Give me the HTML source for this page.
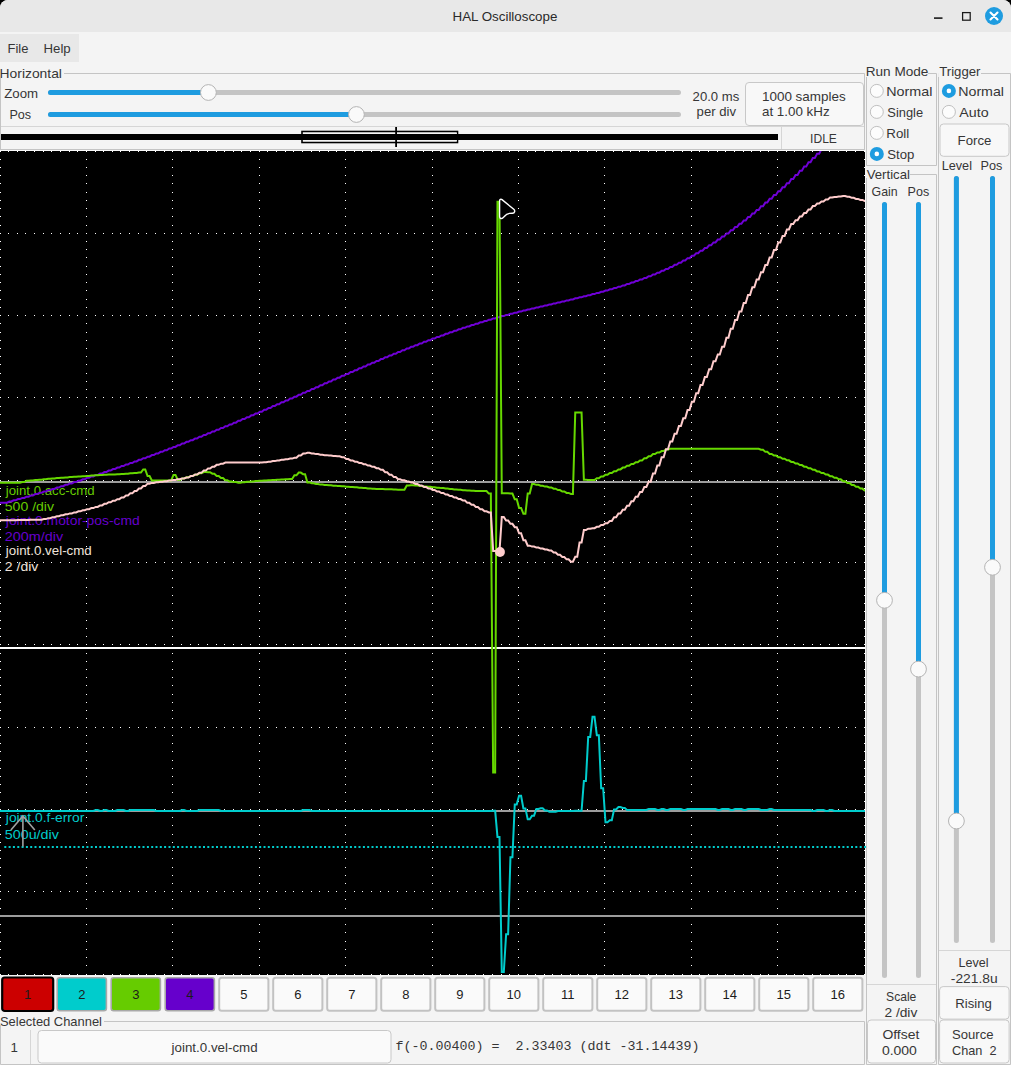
<!DOCTYPE html>
<html><head><meta charset="utf-8"><style>html,body{margin:0;padding:0;background:#000;width:1011px;height:1065px;overflow:hidden}svg{display:block}text{white-space:pre}</style></head>
<body><svg width="1011" height="1065" viewBox="0 0 1011 1065">
<rect x="0" y="0" width="1011" height="1065" fill="#000"/>
<path d="M0,8 A8,8 0 0 1 8,0 H1003 A8,8 0 0 1 1011,8 V1065 H0 Z" fill="#f4f4f4"/>
<path d="M0,8 A8,8 0 0 1 8,0 H1003 A8,8 0 0 1 1011,8 V32 H0 Z" fill="#e8e8e8"/>
<text x="452.50" y="20.8" font-size="13.3" fill="#2a2a2a" font-family='"Liberation Sans", sans-serif' textLength="104.89" lengthAdjust="spacingAndGlyphs">HAL Oscilloscope</text>
<rect x="934" y="17.3" width="8.5" height="1.6" fill="#1a1a1a" rx="0" />
<rect x="962.6" y="12.6" width="7.6" height="7.6" fill="none" stroke="#1a1a1a" stroke-width="1.25" rx="0" />
<circle cx="994" cy="16" r="9" fill="#1e9ce0"/>
<path d="M990.5,12.5 L997.5,19.5 M997.5,12.5 L990.5,19.5" stroke="#fff" stroke-width="2.1" stroke-linecap="round"/>
<rect x="0" y="34" width="79" height="28" fill="#e8e8e8" rx="0" />
<text x="7.53" y="53" font-size="13.3" fill="#363636" font-family='"Liberation Sans", sans-serif' textLength="20.86" lengthAdjust="spacingAndGlyphs">File</text>
<text x="43.51" y="53" font-size="13.3" fill="#363636" font-family='"Liberation Sans", sans-serif' textLength="27.19" lengthAdjust="spacingAndGlyphs">Help</text>
<path d="M0.5,149.5 V73.5 H864.5 V149.5" fill="none" stroke="#c4c4c4" stroke-width="1"/>
<rect x="0" y="64" width="64" height="14" fill="#f4f4f4" rx="0" />
<text x="-0.44" y="77.8" font-size="13.3" fill="#363636" font-family='"Liberation Sans", sans-serif' textLength="62.39" lengthAdjust="spacingAndGlyphs">Horizontal</text>
<text x="4.20" y="97.7" font-size="13.3" fill="#363636" font-family='"Liberation Sans", sans-serif' textLength="33.88" lengthAdjust="spacingAndGlyphs">Zoom</text>
<text x="9.45" y="119" font-size="13.3" fill="#363636" font-family='"Liberation Sans", sans-serif' textLength="21.71" lengthAdjust="spacingAndGlyphs">Pos</text>
<line x1="50.5" y1="92.5" x2="678.5" y2="92.5" stroke="#c4c4c4" stroke-width="5" stroke-linecap="round"/>
<line x1="50.5" y1="92.5" x2="208.4" y2="92.5" stroke="#1e9ce0" stroke-width="5" stroke-linecap="round"/>
<circle cx="208.4" cy="92.5" r="7.9" fill="#fafafa" stroke="#b4b4b4" stroke-width="1"/>
<line x1="50.5" y1="114.5" x2="678.5" y2="114.5" stroke="#c4c4c4" stroke-width="5" stroke-linecap="round"/>
<line x1="50.5" y1="114.5" x2="356.4" y2="114.5" stroke="#1e9ce0" stroke-width="5" stroke-linecap="round"/>
<circle cx="356.4" cy="114.5" r="7.9" fill="#fafafa" stroke="#b4b4b4" stroke-width="1"/>
<text x="692.60" y="100.6" font-size="13.3" fill="#363636" font-family='"Liberation Sans", sans-serif' textLength="46.65" lengthAdjust="spacingAndGlyphs">20.0 ms</text>
<text x="696.60" y="116" font-size="13.3" fill="#363636" font-family='"Liberation Sans", sans-serif' textLength="39.35" lengthAdjust="spacingAndGlyphs">per div</text>
<rect x="745.5" y="82.5" width="118" height="43" fill="#f8f8f8" stroke="#c8c8c8" stroke-width="1" rx="3.5" />
<text x="761.99" y="100.6" font-size="13.3" fill="#363636" font-family='"Liberation Sans", sans-serif' textLength="83.66" lengthAdjust="spacingAndGlyphs">1000 samples</text>
<text x="762.00" y="116.2" font-size="13.3" fill="#363636" font-family='"Liberation Sans", sans-serif' textLength="67.65" lengthAdjust="spacingAndGlyphs">at 1.00 kHz</text>
<line x1="1" y1="126.5" x2="864" y2="126.5" stroke="#d6d6d6" stroke-width="1" />
<line x1="781.5" y1="127" x2="781.5" y2="149" stroke="#d6d6d6" stroke-width="1" />
<text x="810.09" y="142.7" font-size="13.3" fill="#363636" font-family='"Liberation Sans", sans-serif' textLength="26.79" lengthAdjust="spacingAndGlyphs">IDLE</text>
<rect x="1" y="134" width="777" height="6" fill="#000" rx="0" />
<rect x="302" y="131.5" width="155.5" height="11" fill="none" stroke="#000" stroke-width="1.6" rx="0" />
<line x1="303" y1="133.3" x2="457" y2="133.3" stroke="#f4f4f4" stroke-width="1" />
<line x1="303" y1="140.7" x2="457" y2="140.7" stroke="#f4f4f4" stroke-width="1" />
<rect x="395.2" y="127" width="1.8" height="20" fill="#000" rx="0" />
<line x1="0" y1="149.5" x2="865" y2="149.5" stroke="#c4c4c4" stroke-width="1" />
<line x1="0" y1="150.5" x2="865" y2="150.5" stroke="#f9f9f9" stroke-width="1" />
<rect x="0" y="151" width="865" height="824" fill="#000" rx="0" />
<path d="M0,151h1v1h-1zM0,159h1v1h-1zM0,167h1v1h-1zM0,175h1v1h-1zM0,183h1v1h-1zM0,192h1v1h-1zM0,200h1v1h-1zM0,208h1v1h-1zM0,216h1v1h-1zM0,225h1v1h-1zM0,233h1v1h-1zM0,241h1v1h-1zM0,249h1v1h-1zM0,257h1v1h-1zM0,266h1v1h-1zM0,274h1v1h-1zM0,282h1v1h-1zM0,290h1v1h-1zM0,299h1v1h-1zM0,307h1v1h-1zM0,315h1v1h-1zM0,323h1v1h-1zM0,332h1v1h-1zM0,340h1v1h-1zM0,348h1v1h-1zM0,356h1v1h-1zM0,364h1v1h-1zM0,373h1v1h-1zM0,381h1v1h-1zM0,389h1v1h-1zM0,397h1v1h-1zM0,406h1v1h-1zM0,414h1v1h-1zM0,422h1v1h-1zM0,430h1v1h-1zM0,439h1v1h-1zM0,447h1v1h-1zM0,455h1v1h-1zM0,463h1v1h-1zM0,471h1v1h-1zM0,480h1v1h-1zM0,488h1v1h-1zM0,496h1v1h-1zM0,504h1v1h-1zM0,513h1v1h-1zM0,521h1v1h-1zM0,529h1v1h-1zM0,537h1v1h-1zM0,546h1v1h-1zM0,554h1v1h-1zM0,562h1v1h-1zM0,570h1v1h-1zM0,578h1v1h-1zM0,587h1v1h-1zM0,595h1v1h-1zM0,603h1v1h-1zM0,611h1v1h-1zM0,620h1v1h-1zM0,628h1v1h-1zM0,636h1v1h-1zM0,644h1v1h-1zM0,653h1v1h-1zM0,661h1v1h-1zM0,669h1v1h-1zM0,677h1v1h-1zM0,685h1v1h-1zM0,694h1v1h-1zM0,702h1v1h-1zM0,710h1v1h-1zM0,718h1v1h-1zM0,727h1v1h-1zM0,735h1v1h-1zM0,743h1v1h-1zM0,751h1v1h-1zM0,760h1v1h-1zM0,768h1v1h-1zM0,776h1v1h-1zM0,784h1v1h-1zM0,792h1v1h-1zM0,801h1v1h-1zM0,809h1v1h-1zM0,817h1v1h-1zM0,825h1v1h-1zM0,834h1v1h-1zM0,842h1v1h-1zM0,850h1v1h-1zM0,858h1v1h-1zM0,867h1v1h-1zM0,875h1v1h-1zM0,883h1v1h-1zM0,891h1v1h-1zM0,899h1v1h-1zM0,908h1v1h-1zM0,916h1v1h-1zM0,924h1v1h-1zM0,932h1v1h-1zM0,941h1v1h-1zM0,949h1v1h-1zM0,957h1v1h-1zM0,965h1v1h-1zM0,974h1v1h-1zM86,151h1v1h-1zM86,159h1v1h-1zM86,167h1v1h-1zM86,175h1v1h-1zM86,183h1v1h-1zM86,192h1v1h-1zM86,200h1v1h-1zM86,208h1v1h-1zM86,216h1v1h-1zM86,225h1v1h-1zM86,233h1v1h-1zM86,241h1v1h-1zM86,249h1v1h-1zM86,257h1v1h-1zM86,266h1v1h-1zM86,274h1v1h-1zM86,282h1v1h-1zM86,290h1v1h-1zM86,299h1v1h-1zM86,307h1v1h-1zM86,315h1v1h-1zM86,323h1v1h-1zM86,332h1v1h-1zM86,340h1v1h-1zM86,348h1v1h-1zM86,356h1v1h-1zM86,364h1v1h-1zM86,373h1v1h-1zM86,381h1v1h-1zM86,389h1v1h-1zM86,397h1v1h-1zM86,406h1v1h-1zM86,414h1v1h-1zM86,422h1v1h-1zM86,430h1v1h-1zM86,439h1v1h-1zM86,447h1v1h-1zM86,455h1v1h-1zM86,463h1v1h-1zM86,471h1v1h-1zM86,480h1v1h-1zM86,488h1v1h-1zM86,496h1v1h-1zM86,504h1v1h-1zM86,513h1v1h-1zM86,521h1v1h-1zM86,529h1v1h-1zM86,537h1v1h-1zM86,546h1v1h-1zM86,554h1v1h-1zM86,562h1v1h-1zM86,570h1v1h-1zM86,578h1v1h-1zM86,587h1v1h-1zM86,595h1v1h-1zM86,603h1v1h-1zM86,611h1v1h-1zM86,620h1v1h-1zM86,628h1v1h-1zM86,636h1v1h-1zM86,644h1v1h-1zM86,653h1v1h-1zM86,661h1v1h-1zM86,669h1v1h-1zM86,677h1v1h-1zM86,685h1v1h-1zM86,694h1v1h-1zM86,702h1v1h-1zM86,710h1v1h-1zM86,718h1v1h-1zM86,727h1v1h-1zM86,735h1v1h-1zM86,743h1v1h-1zM86,751h1v1h-1zM86,760h1v1h-1zM86,768h1v1h-1zM86,776h1v1h-1zM86,784h1v1h-1zM86,792h1v1h-1zM86,801h1v1h-1zM86,809h1v1h-1zM86,817h1v1h-1zM86,825h1v1h-1zM86,834h1v1h-1zM86,842h1v1h-1zM86,850h1v1h-1zM86,858h1v1h-1zM86,867h1v1h-1zM86,875h1v1h-1zM86,883h1v1h-1zM86,891h1v1h-1zM86,899h1v1h-1zM86,908h1v1h-1zM86,916h1v1h-1zM86,924h1v1h-1zM86,932h1v1h-1zM86,941h1v1h-1zM86,949h1v1h-1zM86,957h1v1h-1zM86,965h1v1h-1zM86,974h1v1h-1zM172,151h1v1h-1zM172,159h1v1h-1zM172,167h1v1h-1zM172,175h1v1h-1zM172,183h1v1h-1zM172,192h1v1h-1zM172,200h1v1h-1zM172,208h1v1h-1zM172,216h1v1h-1zM172,225h1v1h-1zM172,233h1v1h-1zM172,241h1v1h-1zM172,249h1v1h-1zM172,257h1v1h-1zM172,266h1v1h-1zM172,274h1v1h-1zM172,282h1v1h-1zM172,290h1v1h-1zM172,299h1v1h-1zM172,307h1v1h-1zM172,315h1v1h-1zM172,323h1v1h-1zM172,332h1v1h-1zM172,340h1v1h-1zM172,348h1v1h-1zM172,356h1v1h-1zM172,364h1v1h-1zM172,373h1v1h-1zM172,381h1v1h-1zM172,389h1v1h-1zM172,397h1v1h-1zM172,406h1v1h-1zM172,414h1v1h-1zM172,422h1v1h-1zM172,430h1v1h-1zM172,439h1v1h-1zM172,447h1v1h-1zM172,455h1v1h-1zM172,463h1v1h-1zM172,471h1v1h-1zM172,480h1v1h-1zM172,488h1v1h-1zM172,496h1v1h-1zM172,504h1v1h-1zM172,513h1v1h-1zM172,521h1v1h-1zM172,529h1v1h-1zM172,537h1v1h-1zM172,546h1v1h-1zM172,554h1v1h-1zM172,562h1v1h-1zM172,570h1v1h-1zM172,578h1v1h-1zM172,587h1v1h-1zM172,595h1v1h-1zM172,603h1v1h-1zM172,611h1v1h-1zM172,620h1v1h-1zM172,628h1v1h-1zM172,636h1v1h-1zM172,644h1v1h-1zM172,653h1v1h-1zM172,661h1v1h-1zM172,669h1v1h-1zM172,677h1v1h-1zM172,685h1v1h-1zM172,694h1v1h-1zM172,702h1v1h-1zM172,710h1v1h-1zM172,718h1v1h-1zM172,727h1v1h-1zM172,735h1v1h-1zM172,743h1v1h-1zM172,751h1v1h-1zM172,760h1v1h-1zM172,768h1v1h-1zM172,776h1v1h-1zM172,784h1v1h-1zM172,792h1v1h-1zM172,801h1v1h-1zM172,809h1v1h-1zM172,817h1v1h-1zM172,825h1v1h-1zM172,834h1v1h-1zM172,842h1v1h-1zM172,850h1v1h-1zM172,858h1v1h-1zM172,867h1v1h-1zM172,875h1v1h-1zM172,883h1v1h-1zM172,891h1v1h-1zM172,899h1v1h-1zM172,908h1v1h-1zM172,916h1v1h-1zM172,924h1v1h-1zM172,932h1v1h-1zM172,941h1v1h-1zM172,949h1v1h-1zM172,957h1v1h-1zM172,965h1v1h-1zM172,974h1v1h-1zM259,151h1v1h-1zM259,159h1v1h-1zM259,167h1v1h-1zM259,175h1v1h-1zM259,183h1v1h-1zM259,192h1v1h-1zM259,200h1v1h-1zM259,208h1v1h-1zM259,216h1v1h-1zM259,225h1v1h-1zM259,233h1v1h-1zM259,241h1v1h-1zM259,249h1v1h-1zM259,257h1v1h-1zM259,266h1v1h-1zM259,274h1v1h-1zM259,282h1v1h-1zM259,290h1v1h-1zM259,299h1v1h-1zM259,307h1v1h-1zM259,315h1v1h-1zM259,323h1v1h-1zM259,332h1v1h-1zM259,340h1v1h-1zM259,348h1v1h-1zM259,356h1v1h-1zM259,364h1v1h-1zM259,373h1v1h-1zM259,381h1v1h-1zM259,389h1v1h-1zM259,397h1v1h-1zM259,406h1v1h-1zM259,414h1v1h-1zM259,422h1v1h-1zM259,430h1v1h-1zM259,439h1v1h-1zM259,447h1v1h-1zM259,455h1v1h-1zM259,463h1v1h-1zM259,471h1v1h-1zM259,480h1v1h-1zM259,488h1v1h-1zM259,496h1v1h-1zM259,504h1v1h-1zM259,513h1v1h-1zM259,521h1v1h-1zM259,529h1v1h-1zM259,537h1v1h-1zM259,546h1v1h-1zM259,554h1v1h-1zM259,562h1v1h-1zM259,570h1v1h-1zM259,578h1v1h-1zM259,587h1v1h-1zM259,595h1v1h-1zM259,603h1v1h-1zM259,611h1v1h-1zM259,620h1v1h-1zM259,628h1v1h-1zM259,636h1v1h-1zM259,644h1v1h-1zM259,653h1v1h-1zM259,661h1v1h-1zM259,669h1v1h-1zM259,677h1v1h-1zM259,685h1v1h-1zM259,694h1v1h-1zM259,702h1v1h-1zM259,710h1v1h-1zM259,718h1v1h-1zM259,727h1v1h-1zM259,735h1v1h-1zM259,743h1v1h-1zM259,751h1v1h-1zM259,760h1v1h-1zM259,768h1v1h-1zM259,776h1v1h-1zM259,784h1v1h-1zM259,792h1v1h-1zM259,801h1v1h-1zM259,809h1v1h-1zM259,817h1v1h-1zM259,825h1v1h-1zM259,834h1v1h-1zM259,842h1v1h-1zM259,850h1v1h-1zM259,858h1v1h-1zM259,867h1v1h-1zM259,875h1v1h-1zM259,883h1v1h-1zM259,891h1v1h-1zM259,899h1v1h-1zM259,908h1v1h-1zM259,916h1v1h-1zM259,924h1v1h-1zM259,932h1v1h-1zM259,941h1v1h-1zM259,949h1v1h-1zM259,957h1v1h-1zM259,965h1v1h-1zM259,974h1v1h-1zM345,151h1v1h-1zM345,159h1v1h-1zM345,167h1v1h-1zM345,175h1v1h-1zM345,183h1v1h-1zM345,192h1v1h-1zM345,200h1v1h-1zM345,208h1v1h-1zM345,216h1v1h-1zM345,225h1v1h-1zM345,233h1v1h-1zM345,241h1v1h-1zM345,249h1v1h-1zM345,257h1v1h-1zM345,266h1v1h-1zM345,274h1v1h-1zM345,282h1v1h-1zM345,290h1v1h-1zM345,299h1v1h-1zM345,307h1v1h-1zM345,315h1v1h-1zM345,323h1v1h-1zM345,332h1v1h-1zM345,340h1v1h-1zM345,348h1v1h-1zM345,356h1v1h-1zM345,364h1v1h-1zM345,373h1v1h-1zM345,381h1v1h-1zM345,389h1v1h-1zM345,397h1v1h-1zM345,406h1v1h-1zM345,414h1v1h-1zM345,422h1v1h-1zM345,430h1v1h-1zM345,439h1v1h-1zM345,447h1v1h-1zM345,455h1v1h-1zM345,463h1v1h-1zM345,471h1v1h-1zM345,480h1v1h-1zM345,488h1v1h-1zM345,496h1v1h-1zM345,504h1v1h-1zM345,513h1v1h-1zM345,521h1v1h-1zM345,529h1v1h-1zM345,537h1v1h-1zM345,546h1v1h-1zM345,554h1v1h-1zM345,562h1v1h-1zM345,570h1v1h-1zM345,578h1v1h-1zM345,587h1v1h-1zM345,595h1v1h-1zM345,603h1v1h-1zM345,611h1v1h-1zM345,620h1v1h-1zM345,628h1v1h-1zM345,636h1v1h-1zM345,644h1v1h-1zM345,653h1v1h-1zM345,661h1v1h-1zM345,669h1v1h-1zM345,677h1v1h-1zM345,685h1v1h-1zM345,694h1v1h-1zM345,702h1v1h-1zM345,710h1v1h-1zM345,718h1v1h-1zM345,727h1v1h-1zM345,735h1v1h-1zM345,743h1v1h-1zM345,751h1v1h-1zM345,760h1v1h-1zM345,768h1v1h-1zM345,776h1v1h-1zM345,784h1v1h-1zM345,792h1v1h-1zM345,801h1v1h-1zM345,809h1v1h-1zM345,817h1v1h-1zM345,825h1v1h-1zM345,834h1v1h-1zM345,842h1v1h-1zM345,850h1v1h-1zM345,858h1v1h-1zM345,867h1v1h-1zM345,875h1v1h-1zM345,883h1v1h-1zM345,891h1v1h-1zM345,899h1v1h-1zM345,908h1v1h-1zM345,916h1v1h-1zM345,924h1v1h-1zM345,932h1v1h-1zM345,941h1v1h-1zM345,949h1v1h-1zM345,957h1v1h-1zM345,965h1v1h-1zM345,974h1v1h-1zM432,151h1v1h-1zM432,159h1v1h-1zM432,167h1v1h-1zM432,175h1v1h-1zM432,183h1v1h-1zM432,192h1v1h-1zM432,200h1v1h-1zM432,208h1v1h-1zM432,216h1v1h-1zM432,225h1v1h-1zM432,233h1v1h-1zM432,241h1v1h-1zM432,249h1v1h-1zM432,257h1v1h-1zM432,266h1v1h-1zM432,274h1v1h-1zM432,282h1v1h-1zM432,290h1v1h-1zM432,299h1v1h-1zM432,307h1v1h-1zM432,315h1v1h-1zM432,323h1v1h-1zM432,332h1v1h-1zM432,340h1v1h-1zM432,348h1v1h-1zM432,356h1v1h-1zM432,364h1v1h-1zM432,373h1v1h-1zM432,381h1v1h-1zM432,389h1v1h-1zM432,397h1v1h-1zM432,406h1v1h-1zM432,414h1v1h-1zM432,422h1v1h-1zM432,430h1v1h-1zM432,439h1v1h-1zM432,447h1v1h-1zM432,455h1v1h-1zM432,463h1v1h-1zM432,471h1v1h-1zM432,480h1v1h-1zM432,488h1v1h-1zM432,496h1v1h-1zM432,504h1v1h-1zM432,513h1v1h-1zM432,521h1v1h-1zM432,529h1v1h-1zM432,537h1v1h-1zM432,546h1v1h-1zM432,554h1v1h-1zM432,562h1v1h-1zM432,570h1v1h-1zM432,578h1v1h-1zM432,587h1v1h-1zM432,595h1v1h-1zM432,603h1v1h-1zM432,611h1v1h-1zM432,620h1v1h-1zM432,628h1v1h-1zM432,636h1v1h-1zM432,644h1v1h-1zM432,653h1v1h-1zM432,661h1v1h-1zM432,669h1v1h-1zM432,677h1v1h-1zM432,685h1v1h-1zM432,694h1v1h-1zM432,702h1v1h-1zM432,710h1v1h-1zM432,718h1v1h-1zM432,727h1v1h-1zM432,735h1v1h-1zM432,743h1v1h-1zM432,751h1v1h-1zM432,760h1v1h-1zM432,768h1v1h-1zM432,776h1v1h-1zM432,784h1v1h-1zM432,792h1v1h-1zM432,801h1v1h-1zM432,809h1v1h-1zM432,817h1v1h-1zM432,825h1v1h-1zM432,834h1v1h-1zM432,842h1v1h-1zM432,850h1v1h-1zM432,858h1v1h-1zM432,867h1v1h-1zM432,875h1v1h-1zM432,883h1v1h-1zM432,891h1v1h-1zM432,899h1v1h-1zM432,908h1v1h-1zM432,916h1v1h-1zM432,924h1v1h-1zM432,932h1v1h-1zM432,941h1v1h-1zM432,949h1v1h-1zM432,957h1v1h-1zM432,965h1v1h-1zM432,974h1v1h-1zM518,151h1v1h-1zM518,159h1v1h-1zM518,167h1v1h-1zM518,175h1v1h-1zM518,183h1v1h-1zM518,192h1v1h-1zM518,200h1v1h-1zM518,208h1v1h-1zM518,216h1v1h-1zM518,225h1v1h-1zM518,233h1v1h-1zM518,241h1v1h-1zM518,249h1v1h-1zM518,257h1v1h-1zM518,266h1v1h-1zM518,274h1v1h-1zM518,282h1v1h-1zM518,290h1v1h-1zM518,299h1v1h-1zM518,307h1v1h-1zM518,315h1v1h-1zM518,323h1v1h-1zM518,332h1v1h-1zM518,340h1v1h-1zM518,348h1v1h-1zM518,356h1v1h-1zM518,364h1v1h-1zM518,373h1v1h-1zM518,381h1v1h-1zM518,389h1v1h-1zM518,397h1v1h-1zM518,406h1v1h-1zM518,414h1v1h-1zM518,422h1v1h-1zM518,430h1v1h-1zM518,439h1v1h-1zM518,447h1v1h-1zM518,455h1v1h-1zM518,463h1v1h-1zM518,471h1v1h-1zM518,480h1v1h-1zM518,488h1v1h-1zM518,496h1v1h-1zM518,504h1v1h-1zM518,513h1v1h-1zM518,521h1v1h-1zM518,529h1v1h-1zM518,537h1v1h-1zM518,546h1v1h-1zM518,554h1v1h-1zM518,562h1v1h-1zM518,570h1v1h-1zM518,578h1v1h-1zM518,587h1v1h-1zM518,595h1v1h-1zM518,603h1v1h-1zM518,611h1v1h-1zM518,620h1v1h-1zM518,628h1v1h-1zM518,636h1v1h-1zM518,644h1v1h-1zM518,653h1v1h-1zM518,661h1v1h-1zM518,669h1v1h-1zM518,677h1v1h-1zM518,685h1v1h-1zM518,694h1v1h-1zM518,702h1v1h-1zM518,710h1v1h-1zM518,718h1v1h-1zM518,727h1v1h-1zM518,735h1v1h-1zM518,743h1v1h-1zM518,751h1v1h-1zM518,760h1v1h-1zM518,768h1v1h-1zM518,776h1v1h-1zM518,784h1v1h-1zM518,792h1v1h-1zM518,801h1v1h-1zM518,809h1v1h-1zM518,817h1v1h-1zM518,825h1v1h-1zM518,834h1v1h-1zM518,842h1v1h-1zM518,850h1v1h-1zM518,858h1v1h-1zM518,867h1v1h-1zM518,875h1v1h-1zM518,883h1v1h-1zM518,891h1v1h-1zM518,899h1v1h-1zM518,908h1v1h-1zM518,916h1v1h-1zM518,924h1v1h-1zM518,932h1v1h-1zM518,941h1v1h-1zM518,949h1v1h-1zM518,957h1v1h-1zM518,965h1v1h-1zM518,974h1v1h-1zM604,151h1v1h-1zM604,159h1v1h-1zM604,167h1v1h-1zM604,175h1v1h-1zM604,183h1v1h-1zM604,192h1v1h-1zM604,200h1v1h-1zM604,208h1v1h-1zM604,216h1v1h-1zM604,225h1v1h-1zM604,233h1v1h-1zM604,241h1v1h-1zM604,249h1v1h-1zM604,257h1v1h-1zM604,266h1v1h-1zM604,274h1v1h-1zM604,282h1v1h-1zM604,290h1v1h-1zM604,299h1v1h-1zM604,307h1v1h-1zM604,315h1v1h-1zM604,323h1v1h-1zM604,332h1v1h-1zM604,340h1v1h-1zM604,348h1v1h-1zM604,356h1v1h-1zM604,364h1v1h-1zM604,373h1v1h-1zM604,381h1v1h-1zM604,389h1v1h-1zM604,397h1v1h-1zM604,406h1v1h-1zM604,414h1v1h-1zM604,422h1v1h-1zM604,430h1v1h-1zM604,439h1v1h-1zM604,447h1v1h-1zM604,455h1v1h-1zM604,463h1v1h-1zM604,471h1v1h-1zM604,480h1v1h-1zM604,488h1v1h-1zM604,496h1v1h-1zM604,504h1v1h-1zM604,513h1v1h-1zM604,521h1v1h-1zM604,529h1v1h-1zM604,537h1v1h-1zM604,546h1v1h-1zM604,554h1v1h-1zM604,562h1v1h-1zM604,570h1v1h-1zM604,578h1v1h-1zM604,587h1v1h-1zM604,595h1v1h-1zM604,603h1v1h-1zM604,611h1v1h-1zM604,620h1v1h-1zM604,628h1v1h-1zM604,636h1v1h-1zM604,644h1v1h-1zM604,653h1v1h-1zM604,661h1v1h-1zM604,669h1v1h-1zM604,677h1v1h-1zM604,685h1v1h-1zM604,694h1v1h-1zM604,702h1v1h-1zM604,710h1v1h-1zM604,718h1v1h-1zM604,727h1v1h-1zM604,735h1v1h-1zM604,743h1v1h-1zM604,751h1v1h-1zM604,760h1v1h-1zM604,768h1v1h-1zM604,776h1v1h-1zM604,784h1v1h-1zM604,792h1v1h-1zM604,801h1v1h-1zM604,809h1v1h-1zM604,817h1v1h-1zM604,825h1v1h-1zM604,834h1v1h-1zM604,842h1v1h-1zM604,850h1v1h-1zM604,858h1v1h-1zM604,867h1v1h-1zM604,875h1v1h-1zM604,883h1v1h-1zM604,891h1v1h-1zM604,899h1v1h-1zM604,908h1v1h-1zM604,916h1v1h-1zM604,924h1v1h-1zM604,932h1v1h-1zM604,941h1v1h-1zM604,949h1v1h-1zM604,957h1v1h-1zM604,965h1v1h-1zM604,974h1v1h-1zM691,151h1v1h-1zM691,159h1v1h-1zM691,167h1v1h-1zM691,175h1v1h-1zM691,183h1v1h-1zM691,192h1v1h-1zM691,200h1v1h-1zM691,208h1v1h-1zM691,216h1v1h-1zM691,225h1v1h-1zM691,233h1v1h-1zM691,241h1v1h-1zM691,249h1v1h-1zM691,257h1v1h-1zM691,266h1v1h-1zM691,274h1v1h-1zM691,282h1v1h-1zM691,290h1v1h-1zM691,299h1v1h-1zM691,307h1v1h-1zM691,315h1v1h-1zM691,323h1v1h-1zM691,332h1v1h-1zM691,340h1v1h-1zM691,348h1v1h-1zM691,356h1v1h-1zM691,364h1v1h-1zM691,373h1v1h-1zM691,381h1v1h-1zM691,389h1v1h-1zM691,397h1v1h-1zM691,406h1v1h-1zM691,414h1v1h-1zM691,422h1v1h-1zM691,430h1v1h-1zM691,439h1v1h-1zM691,447h1v1h-1zM691,455h1v1h-1zM691,463h1v1h-1zM691,471h1v1h-1zM691,480h1v1h-1zM691,488h1v1h-1zM691,496h1v1h-1zM691,504h1v1h-1zM691,513h1v1h-1zM691,521h1v1h-1zM691,529h1v1h-1zM691,537h1v1h-1zM691,546h1v1h-1zM691,554h1v1h-1zM691,562h1v1h-1zM691,570h1v1h-1zM691,578h1v1h-1zM691,587h1v1h-1zM691,595h1v1h-1zM691,603h1v1h-1zM691,611h1v1h-1zM691,620h1v1h-1zM691,628h1v1h-1zM691,636h1v1h-1zM691,644h1v1h-1zM691,653h1v1h-1zM691,661h1v1h-1zM691,669h1v1h-1zM691,677h1v1h-1zM691,685h1v1h-1zM691,694h1v1h-1zM691,702h1v1h-1zM691,710h1v1h-1zM691,718h1v1h-1zM691,727h1v1h-1zM691,735h1v1h-1zM691,743h1v1h-1zM691,751h1v1h-1zM691,760h1v1h-1zM691,768h1v1h-1zM691,776h1v1h-1zM691,784h1v1h-1zM691,792h1v1h-1zM691,801h1v1h-1zM691,809h1v1h-1zM691,817h1v1h-1zM691,825h1v1h-1zM691,834h1v1h-1zM691,842h1v1h-1zM691,850h1v1h-1zM691,858h1v1h-1zM691,867h1v1h-1zM691,875h1v1h-1zM691,883h1v1h-1zM691,891h1v1h-1zM691,899h1v1h-1zM691,908h1v1h-1zM691,916h1v1h-1zM691,924h1v1h-1zM691,932h1v1h-1zM691,941h1v1h-1zM691,949h1v1h-1zM691,957h1v1h-1zM691,965h1v1h-1zM691,974h1v1h-1zM777,151h1v1h-1zM777,159h1v1h-1zM777,167h1v1h-1zM777,175h1v1h-1zM777,183h1v1h-1zM777,192h1v1h-1zM777,200h1v1h-1zM777,208h1v1h-1zM777,216h1v1h-1zM777,225h1v1h-1zM777,233h1v1h-1zM777,241h1v1h-1zM777,249h1v1h-1zM777,257h1v1h-1zM777,266h1v1h-1zM777,274h1v1h-1zM777,282h1v1h-1zM777,290h1v1h-1zM777,299h1v1h-1zM777,307h1v1h-1zM777,315h1v1h-1zM777,323h1v1h-1zM777,332h1v1h-1zM777,340h1v1h-1zM777,348h1v1h-1zM777,356h1v1h-1zM777,364h1v1h-1zM777,373h1v1h-1zM777,381h1v1h-1zM777,389h1v1h-1zM777,397h1v1h-1zM777,406h1v1h-1zM777,414h1v1h-1zM777,422h1v1h-1zM777,430h1v1h-1zM777,439h1v1h-1zM777,447h1v1h-1zM777,455h1v1h-1zM777,463h1v1h-1zM777,471h1v1h-1zM777,480h1v1h-1zM777,488h1v1h-1zM777,496h1v1h-1zM777,504h1v1h-1zM777,513h1v1h-1zM777,521h1v1h-1zM777,529h1v1h-1zM777,537h1v1h-1zM777,546h1v1h-1zM777,554h1v1h-1zM777,562h1v1h-1zM777,570h1v1h-1zM777,578h1v1h-1zM777,587h1v1h-1zM777,595h1v1h-1zM777,603h1v1h-1zM777,611h1v1h-1zM777,620h1v1h-1zM777,628h1v1h-1zM777,636h1v1h-1zM777,644h1v1h-1zM777,653h1v1h-1zM777,661h1v1h-1zM777,669h1v1h-1zM777,677h1v1h-1zM777,685h1v1h-1zM777,694h1v1h-1zM777,702h1v1h-1zM777,710h1v1h-1zM777,718h1v1h-1zM777,727h1v1h-1zM777,735h1v1h-1zM777,743h1v1h-1zM777,751h1v1h-1zM777,760h1v1h-1zM777,768h1v1h-1zM777,776h1v1h-1zM777,784h1v1h-1zM777,792h1v1h-1zM777,801h1v1h-1zM777,809h1v1h-1zM777,817h1v1h-1zM777,825h1v1h-1zM777,834h1v1h-1zM777,842h1v1h-1zM777,850h1v1h-1zM777,858h1v1h-1zM777,867h1v1h-1zM777,875h1v1h-1zM777,883h1v1h-1zM777,891h1v1h-1zM777,899h1v1h-1zM777,908h1v1h-1zM777,916h1v1h-1zM777,924h1v1h-1zM777,932h1v1h-1zM777,941h1v1h-1zM777,949h1v1h-1zM777,957h1v1h-1zM777,965h1v1h-1zM777,974h1v1h-1zM864,151h1v1h-1zM864,159h1v1h-1zM864,167h1v1h-1zM864,175h1v1h-1zM864,183h1v1h-1zM864,192h1v1h-1zM864,200h1v1h-1zM864,208h1v1h-1zM864,216h1v1h-1zM864,225h1v1h-1zM864,233h1v1h-1zM864,241h1v1h-1zM864,249h1v1h-1zM864,257h1v1h-1zM864,266h1v1h-1zM864,274h1v1h-1zM864,282h1v1h-1zM864,290h1v1h-1zM864,299h1v1h-1zM864,307h1v1h-1zM864,315h1v1h-1zM864,323h1v1h-1zM864,332h1v1h-1zM864,340h1v1h-1zM864,348h1v1h-1zM864,356h1v1h-1zM864,364h1v1h-1zM864,373h1v1h-1zM864,381h1v1h-1zM864,389h1v1h-1zM864,397h1v1h-1zM864,406h1v1h-1zM864,414h1v1h-1zM864,422h1v1h-1zM864,430h1v1h-1zM864,439h1v1h-1zM864,447h1v1h-1zM864,455h1v1h-1zM864,463h1v1h-1zM864,471h1v1h-1zM864,480h1v1h-1zM864,488h1v1h-1zM864,496h1v1h-1zM864,504h1v1h-1zM864,513h1v1h-1zM864,521h1v1h-1zM864,529h1v1h-1zM864,537h1v1h-1zM864,546h1v1h-1zM864,554h1v1h-1zM864,562h1v1h-1zM864,570h1v1h-1zM864,578h1v1h-1zM864,587h1v1h-1zM864,595h1v1h-1zM864,603h1v1h-1zM864,611h1v1h-1zM864,620h1v1h-1zM864,628h1v1h-1zM864,636h1v1h-1zM864,644h1v1h-1zM864,653h1v1h-1zM864,661h1v1h-1zM864,669h1v1h-1zM864,677h1v1h-1zM864,685h1v1h-1zM864,694h1v1h-1zM864,702h1v1h-1zM864,710h1v1h-1zM864,718h1v1h-1zM864,727h1v1h-1zM864,735h1v1h-1zM864,743h1v1h-1zM864,751h1v1h-1zM864,760h1v1h-1zM864,768h1v1h-1zM864,776h1v1h-1zM864,784h1v1h-1zM864,792h1v1h-1zM864,801h1v1h-1zM864,809h1v1h-1zM864,817h1v1h-1zM864,825h1v1h-1zM864,834h1v1h-1zM864,842h1v1h-1zM864,850h1v1h-1zM864,858h1v1h-1zM864,867h1v1h-1zM864,875h1v1h-1zM864,883h1v1h-1zM864,891h1v1h-1zM864,899h1v1h-1zM864,908h1v1h-1zM864,916h1v1h-1zM864,924h1v1h-1zM864,932h1v1h-1zM864,941h1v1h-1zM864,949h1v1h-1zM864,957h1v1h-1zM864,965h1v1h-1zM864,974h1v1h-1zM0,151h1v1h-1zM8,151h1v1h-1zM17,151h1v1h-1zM25,151h1v1h-1zM34,151h1v1h-1zM43,151h1v1h-1zM51,151h1v1h-1zM60,151h1v1h-1zM69,151h1v1h-1zM77,151h1v1h-1zM86,151h1v1h-1zM95,151h1v1h-1zM103,151h1v1h-1zM112,151h1v1h-1zM120,151h1v1h-1zM129,151h1v1h-1zM138,151h1v1h-1zM146,151h1v1h-1zM155,151h1v1h-1zM164,151h1v1h-1zM172,151h1v1h-1zM181,151h1v1h-1zM190,151h1v1h-1zM198,151h1v1h-1zM207,151h1v1h-1zM216,151h1v1h-1zM224,151h1v1h-1zM233,151h1v1h-1zM241,151h1v1h-1zM250,151h1v1h-1zM259,151h1v1h-1zM267,151h1v1h-1zM276,151h1v1h-1zM285,151h1v1h-1zM293,151h1v1h-1zM302,151h1v1h-1zM311,151h1v1h-1zM319,151h1v1h-1zM328,151h1v1h-1zM336,151h1v1h-1zM345,151h1v1h-1zM354,151h1v1h-1zM362,151h1v1h-1zM371,151h1v1h-1zM380,151h1v1h-1zM388,151h1v1h-1zM397,151h1v1h-1zM406,151h1v1h-1zM414,151h1v1h-1zM423,151h1v1h-1zM432,151h1v1h-1zM440,151h1v1h-1zM449,151h1v1h-1zM457,151h1v1h-1zM466,151h1v1h-1zM475,151h1v1h-1zM483,151h1v1h-1zM492,151h1v1h-1zM501,151h1v1h-1zM509,151h1v1h-1zM518,151h1v1h-1zM527,151h1v1h-1zM535,151h1v1h-1zM544,151h1v1h-1zM552,151h1v1h-1zM561,151h1v1h-1zM570,151h1v1h-1zM578,151h1v1h-1zM587,151h1v1h-1zM596,151h1v1h-1zM604,151h1v1h-1zM613,151h1v1h-1zM622,151h1v1h-1zM630,151h1v1h-1zM639,151h1v1h-1zM648,151h1v1h-1zM656,151h1v1h-1zM665,151h1v1h-1zM673,151h1v1h-1zM682,151h1v1h-1zM691,151h1v1h-1zM699,151h1v1h-1zM708,151h1v1h-1zM717,151h1v1h-1zM725,151h1v1h-1zM734,151h1v1h-1zM743,151h1v1h-1zM751,151h1v1h-1zM760,151h1v1h-1zM768,151h1v1h-1zM777,151h1v1h-1zM786,151h1v1h-1zM794,151h1v1h-1zM803,151h1v1h-1zM812,151h1v1h-1zM820,151h1v1h-1zM829,151h1v1h-1zM838,151h1v1h-1zM846,151h1v1h-1zM855,151h1v1h-1zM864,151h1v1h-1zM0,233h1v1h-1zM8,233h1v1h-1zM17,233h1v1h-1zM25,233h1v1h-1zM34,233h1v1h-1zM43,233h1v1h-1zM51,233h1v1h-1zM60,233h1v1h-1zM69,233h1v1h-1zM77,233h1v1h-1zM86,233h1v1h-1zM95,233h1v1h-1zM103,233h1v1h-1zM112,233h1v1h-1zM120,233h1v1h-1zM129,233h1v1h-1zM138,233h1v1h-1zM146,233h1v1h-1zM155,233h1v1h-1zM164,233h1v1h-1zM172,233h1v1h-1zM181,233h1v1h-1zM190,233h1v1h-1zM198,233h1v1h-1zM207,233h1v1h-1zM216,233h1v1h-1zM224,233h1v1h-1zM233,233h1v1h-1zM241,233h1v1h-1zM250,233h1v1h-1zM259,233h1v1h-1zM267,233h1v1h-1zM276,233h1v1h-1zM285,233h1v1h-1zM293,233h1v1h-1zM302,233h1v1h-1zM311,233h1v1h-1zM319,233h1v1h-1zM328,233h1v1h-1zM336,233h1v1h-1zM345,233h1v1h-1zM354,233h1v1h-1zM362,233h1v1h-1zM371,233h1v1h-1zM380,233h1v1h-1zM388,233h1v1h-1zM397,233h1v1h-1zM406,233h1v1h-1zM414,233h1v1h-1zM423,233h1v1h-1zM432,233h1v1h-1zM440,233h1v1h-1zM449,233h1v1h-1zM457,233h1v1h-1zM466,233h1v1h-1zM475,233h1v1h-1zM483,233h1v1h-1zM492,233h1v1h-1zM501,233h1v1h-1zM509,233h1v1h-1zM518,233h1v1h-1zM527,233h1v1h-1zM535,233h1v1h-1zM544,233h1v1h-1zM552,233h1v1h-1zM561,233h1v1h-1zM570,233h1v1h-1zM578,233h1v1h-1zM587,233h1v1h-1zM596,233h1v1h-1zM604,233h1v1h-1zM613,233h1v1h-1zM622,233h1v1h-1zM630,233h1v1h-1zM639,233h1v1h-1zM648,233h1v1h-1zM656,233h1v1h-1zM665,233h1v1h-1zM673,233h1v1h-1zM682,233h1v1h-1zM691,233h1v1h-1zM699,233h1v1h-1zM708,233h1v1h-1zM717,233h1v1h-1zM725,233h1v1h-1zM734,233h1v1h-1zM743,233h1v1h-1zM751,233h1v1h-1zM760,233h1v1h-1zM768,233h1v1h-1zM777,233h1v1h-1zM786,233h1v1h-1zM794,233h1v1h-1zM803,233h1v1h-1zM812,233h1v1h-1zM820,233h1v1h-1zM829,233h1v1h-1zM838,233h1v1h-1zM846,233h1v1h-1zM855,233h1v1h-1zM864,233h1v1h-1zM0,315h1v1h-1zM8,315h1v1h-1zM17,315h1v1h-1zM25,315h1v1h-1zM34,315h1v1h-1zM43,315h1v1h-1zM51,315h1v1h-1zM60,315h1v1h-1zM69,315h1v1h-1zM77,315h1v1h-1zM86,315h1v1h-1zM95,315h1v1h-1zM103,315h1v1h-1zM112,315h1v1h-1zM120,315h1v1h-1zM129,315h1v1h-1zM138,315h1v1h-1zM146,315h1v1h-1zM155,315h1v1h-1zM164,315h1v1h-1zM172,315h1v1h-1zM181,315h1v1h-1zM190,315h1v1h-1zM198,315h1v1h-1zM207,315h1v1h-1zM216,315h1v1h-1zM224,315h1v1h-1zM233,315h1v1h-1zM241,315h1v1h-1zM250,315h1v1h-1zM259,315h1v1h-1zM267,315h1v1h-1zM276,315h1v1h-1zM285,315h1v1h-1zM293,315h1v1h-1zM302,315h1v1h-1zM311,315h1v1h-1zM319,315h1v1h-1zM328,315h1v1h-1zM336,315h1v1h-1zM345,315h1v1h-1zM354,315h1v1h-1zM362,315h1v1h-1zM371,315h1v1h-1zM380,315h1v1h-1zM388,315h1v1h-1zM397,315h1v1h-1zM406,315h1v1h-1zM414,315h1v1h-1zM423,315h1v1h-1zM432,315h1v1h-1zM440,315h1v1h-1zM449,315h1v1h-1zM457,315h1v1h-1zM466,315h1v1h-1zM475,315h1v1h-1zM483,315h1v1h-1zM492,315h1v1h-1zM501,315h1v1h-1zM509,315h1v1h-1zM518,315h1v1h-1zM527,315h1v1h-1zM535,315h1v1h-1zM544,315h1v1h-1zM552,315h1v1h-1zM561,315h1v1h-1zM570,315h1v1h-1zM578,315h1v1h-1zM587,315h1v1h-1zM596,315h1v1h-1zM604,315h1v1h-1zM613,315h1v1h-1zM622,315h1v1h-1zM630,315h1v1h-1zM639,315h1v1h-1zM648,315h1v1h-1zM656,315h1v1h-1zM665,315h1v1h-1zM673,315h1v1h-1zM682,315h1v1h-1zM691,315h1v1h-1zM699,315h1v1h-1zM708,315h1v1h-1zM717,315h1v1h-1zM725,315h1v1h-1zM734,315h1v1h-1zM743,315h1v1h-1zM751,315h1v1h-1zM760,315h1v1h-1zM768,315h1v1h-1zM777,315h1v1h-1zM786,315h1v1h-1zM794,315h1v1h-1zM803,315h1v1h-1zM812,315h1v1h-1zM820,315h1v1h-1zM829,315h1v1h-1zM838,315h1v1h-1zM846,315h1v1h-1zM855,315h1v1h-1zM864,315h1v1h-1zM0,397h1v1h-1zM8,397h1v1h-1zM17,397h1v1h-1zM25,397h1v1h-1zM34,397h1v1h-1zM43,397h1v1h-1zM51,397h1v1h-1zM60,397h1v1h-1zM69,397h1v1h-1zM77,397h1v1h-1zM86,397h1v1h-1zM95,397h1v1h-1zM103,397h1v1h-1zM112,397h1v1h-1zM120,397h1v1h-1zM129,397h1v1h-1zM138,397h1v1h-1zM146,397h1v1h-1zM155,397h1v1h-1zM164,397h1v1h-1zM172,397h1v1h-1zM181,397h1v1h-1zM190,397h1v1h-1zM198,397h1v1h-1zM207,397h1v1h-1zM216,397h1v1h-1zM224,397h1v1h-1zM233,397h1v1h-1zM241,397h1v1h-1zM250,397h1v1h-1zM259,397h1v1h-1zM267,397h1v1h-1zM276,397h1v1h-1zM285,397h1v1h-1zM293,397h1v1h-1zM302,397h1v1h-1zM311,397h1v1h-1zM319,397h1v1h-1zM328,397h1v1h-1zM336,397h1v1h-1zM345,397h1v1h-1zM354,397h1v1h-1zM362,397h1v1h-1zM371,397h1v1h-1zM380,397h1v1h-1zM388,397h1v1h-1zM397,397h1v1h-1zM406,397h1v1h-1zM414,397h1v1h-1zM423,397h1v1h-1zM432,397h1v1h-1zM440,397h1v1h-1zM449,397h1v1h-1zM457,397h1v1h-1zM466,397h1v1h-1zM475,397h1v1h-1zM483,397h1v1h-1zM492,397h1v1h-1zM501,397h1v1h-1zM509,397h1v1h-1zM518,397h1v1h-1zM527,397h1v1h-1zM535,397h1v1h-1zM544,397h1v1h-1zM552,397h1v1h-1zM561,397h1v1h-1zM570,397h1v1h-1zM578,397h1v1h-1zM587,397h1v1h-1zM596,397h1v1h-1zM604,397h1v1h-1zM613,397h1v1h-1zM622,397h1v1h-1zM630,397h1v1h-1zM639,397h1v1h-1zM648,397h1v1h-1zM656,397h1v1h-1zM665,397h1v1h-1zM673,397h1v1h-1zM682,397h1v1h-1zM691,397h1v1h-1zM699,397h1v1h-1zM708,397h1v1h-1zM717,397h1v1h-1zM725,397h1v1h-1zM734,397h1v1h-1zM743,397h1v1h-1zM751,397h1v1h-1zM760,397h1v1h-1zM768,397h1v1h-1zM777,397h1v1h-1zM786,397h1v1h-1zM794,397h1v1h-1zM803,397h1v1h-1zM812,397h1v1h-1zM820,397h1v1h-1zM829,397h1v1h-1zM838,397h1v1h-1zM846,397h1v1h-1zM855,397h1v1h-1zM864,397h1v1h-1zM0,480h1v1h-1zM8,480h1v1h-1zM17,480h1v1h-1zM25,480h1v1h-1zM34,480h1v1h-1zM43,480h1v1h-1zM51,480h1v1h-1zM60,480h1v1h-1zM69,480h1v1h-1zM77,480h1v1h-1zM86,480h1v1h-1zM95,480h1v1h-1zM103,480h1v1h-1zM112,480h1v1h-1zM120,480h1v1h-1zM129,480h1v1h-1zM138,480h1v1h-1zM146,480h1v1h-1zM155,480h1v1h-1zM164,480h1v1h-1zM172,480h1v1h-1zM181,480h1v1h-1zM190,480h1v1h-1zM198,480h1v1h-1zM207,480h1v1h-1zM216,480h1v1h-1zM224,480h1v1h-1zM233,480h1v1h-1zM241,480h1v1h-1zM250,480h1v1h-1zM259,480h1v1h-1zM267,480h1v1h-1zM276,480h1v1h-1zM285,480h1v1h-1zM293,480h1v1h-1zM302,480h1v1h-1zM311,480h1v1h-1zM319,480h1v1h-1zM328,480h1v1h-1zM336,480h1v1h-1zM345,480h1v1h-1zM354,480h1v1h-1zM362,480h1v1h-1zM371,480h1v1h-1zM380,480h1v1h-1zM388,480h1v1h-1zM397,480h1v1h-1zM406,480h1v1h-1zM414,480h1v1h-1zM423,480h1v1h-1zM432,480h1v1h-1zM440,480h1v1h-1zM449,480h1v1h-1zM457,480h1v1h-1zM466,480h1v1h-1zM475,480h1v1h-1zM483,480h1v1h-1zM492,480h1v1h-1zM501,480h1v1h-1zM509,480h1v1h-1zM518,480h1v1h-1zM527,480h1v1h-1zM535,480h1v1h-1zM544,480h1v1h-1zM552,480h1v1h-1zM561,480h1v1h-1zM570,480h1v1h-1zM578,480h1v1h-1zM587,480h1v1h-1zM596,480h1v1h-1zM604,480h1v1h-1zM613,480h1v1h-1zM622,480h1v1h-1zM630,480h1v1h-1zM639,480h1v1h-1zM648,480h1v1h-1zM656,480h1v1h-1zM665,480h1v1h-1zM673,480h1v1h-1zM682,480h1v1h-1zM691,480h1v1h-1zM699,480h1v1h-1zM708,480h1v1h-1zM717,480h1v1h-1zM725,480h1v1h-1zM734,480h1v1h-1zM743,480h1v1h-1zM751,480h1v1h-1zM760,480h1v1h-1zM768,480h1v1h-1zM777,480h1v1h-1zM786,480h1v1h-1zM794,480h1v1h-1zM803,480h1v1h-1zM812,480h1v1h-1zM820,480h1v1h-1zM829,480h1v1h-1zM838,480h1v1h-1zM846,480h1v1h-1zM855,480h1v1h-1zM864,480h1v1h-1zM0,562h1v1h-1zM8,562h1v1h-1zM17,562h1v1h-1zM25,562h1v1h-1zM34,562h1v1h-1zM43,562h1v1h-1zM51,562h1v1h-1zM60,562h1v1h-1zM69,562h1v1h-1zM77,562h1v1h-1zM86,562h1v1h-1zM95,562h1v1h-1zM103,562h1v1h-1zM112,562h1v1h-1zM120,562h1v1h-1zM129,562h1v1h-1zM138,562h1v1h-1zM146,562h1v1h-1zM155,562h1v1h-1zM164,562h1v1h-1zM172,562h1v1h-1zM181,562h1v1h-1zM190,562h1v1h-1zM198,562h1v1h-1zM207,562h1v1h-1zM216,562h1v1h-1zM224,562h1v1h-1zM233,562h1v1h-1zM241,562h1v1h-1zM250,562h1v1h-1zM259,562h1v1h-1zM267,562h1v1h-1zM276,562h1v1h-1zM285,562h1v1h-1zM293,562h1v1h-1zM302,562h1v1h-1zM311,562h1v1h-1zM319,562h1v1h-1zM328,562h1v1h-1zM336,562h1v1h-1zM345,562h1v1h-1zM354,562h1v1h-1zM362,562h1v1h-1zM371,562h1v1h-1zM380,562h1v1h-1zM388,562h1v1h-1zM397,562h1v1h-1zM406,562h1v1h-1zM414,562h1v1h-1zM423,562h1v1h-1zM432,562h1v1h-1zM440,562h1v1h-1zM449,562h1v1h-1zM457,562h1v1h-1zM466,562h1v1h-1zM475,562h1v1h-1zM483,562h1v1h-1zM492,562h1v1h-1zM501,562h1v1h-1zM509,562h1v1h-1zM518,562h1v1h-1zM527,562h1v1h-1zM535,562h1v1h-1zM544,562h1v1h-1zM552,562h1v1h-1zM561,562h1v1h-1zM570,562h1v1h-1zM578,562h1v1h-1zM587,562h1v1h-1zM596,562h1v1h-1zM604,562h1v1h-1zM613,562h1v1h-1zM622,562h1v1h-1zM630,562h1v1h-1zM639,562h1v1h-1zM648,562h1v1h-1zM656,562h1v1h-1zM665,562h1v1h-1zM673,562h1v1h-1zM682,562h1v1h-1zM691,562h1v1h-1zM699,562h1v1h-1zM708,562h1v1h-1zM717,562h1v1h-1zM725,562h1v1h-1zM734,562h1v1h-1zM743,562h1v1h-1zM751,562h1v1h-1zM760,562h1v1h-1zM768,562h1v1h-1zM777,562h1v1h-1zM786,562h1v1h-1zM794,562h1v1h-1zM803,562h1v1h-1zM812,562h1v1h-1zM820,562h1v1h-1zM829,562h1v1h-1zM838,562h1v1h-1zM846,562h1v1h-1zM855,562h1v1h-1zM864,562h1v1h-1zM0,644h1v1h-1zM8,644h1v1h-1zM17,644h1v1h-1zM25,644h1v1h-1zM34,644h1v1h-1zM43,644h1v1h-1zM51,644h1v1h-1zM60,644h1v1h-1zM69,644h1v1h-1zM77,644h1v1h-1zM86,644h1v1h-1zM95,644h1v1h-1zM103,644h1v1h-1zM112,644h1v1h-1zM120,644h1v1h-1zM129,644h1v1h-1zM138,644h1v1h-1zM146,644h1v1h-1zM155,644h1v1h-1zM164,644h1v1h-1zM172,644h1v1h-1zM181,644h1v1h-1zM190,644h1v1h-1zM198,644h1v1h-1zM207,644h1v1h-1zM216,644h1v1h-1zM224,644h1v1h-1zM233,644h1v1h-1zM241,644h1v1h-1zM250,644h1v1h-1zM259,644h1v1h-1zM267,644h1v1h-1zM276,644h1v1h-1zM285,644h1v1h-1zM293,644h1v1h-1zM302,644h1v1h-1zM311,644h1v1h-1zM319,644h1v1h-1zM328,644h1v1h-1zM336,644h1v1h-1zM345,644h1v1h-1zM354,644h1v1h-1zM362,644h1v1h-1zM371,644h1v1h-1zM380,644h1v1h-1zM388,644h1v1h-1zM397,644h1v1h-1zM406,644h1v1h-1zM414,644h1v1h-1zM423,644h1v1h-1zM432,644h1v1h-1zM440,644h1v1h-1zM449,644h1v1h-1zM457,644h1v1h-1zM466,644h1v1h-1zM475,644h1v1h-1zM483,644h1v1h-1zM492,644h1v1h-1zM501,644h1v1h-1zM509,644h1v1h-1zM518,644h1v1h-1zM527,644h1v1h-1zM535,644h1v1h-1zM544,644h1v1h-1zM552,644h1v1h-1zM561,644h1v1h-1zM570,644h1v1h-1zM578,644h1v1h-1zM587,644h1v1h-1zM596,644h1v1h-1zM604,644h1v1h-1zM613,644h1v1h-1zM622,644h1v1h-1zM630,644h1v1h-1zM639,644h1v1h-1zM648,644h1v1h-1zM656,644h1v1h-1zM665,644h1v1h-1zM673,644h1v1h-1zM682,644h1v1h-1zM691,644h1v1h-1zM699,644h1v1h-1zM708,644h1v1h-1zM717,644h1v1h-1zM725,644h1v1h-1zM734,644h1v1h-1zM743,644h1v1h-1zM751,644h1v1h-1zM760,644h1v1h-1zM768,644h1v1h-1zM777,644h1v1h-1zM786,644h1v1h-1zM794,644h1v1h-1zM803,644h1v1h-1zM812,644h1v1h-1zM820,644h1v1h-1zM829,644h1v1h-1zM838,644h1v1h-1zM846,644h1v1h-1zM855,644h1v1h-1zM864,644h1v1h-1zM0,727h1v1h-1zM8,727h1v1h-1zM17,727h1v1h-1zM25,727h1v1h-1zM34,727h1v1h-1zM43,727h1v1h-1zM51,727h1v1h-1zM60,727h1v1h-1zM69,727h1v1h-1zM77,727h1v1h-1zM86,727h1v1h-1zM95,727h1v1h-1zM103,727h1v1h-1zM112,727h1v1h-1zM120,727h1v1h-1zM129,727h1v1h-1zM138,727h1v1h-1zM146,727h1v1h-1zM155,727h1v1h-1zM164,727h1v1h-1zM172,727h1v1h-1zM181,727h1v1h-1zM190,727h1v1h-1zM198,727h1v1h-1zM207,727h1v1h-1zM216,727h1v1h-1zM224,727h1v1h-1zM233,727h1v1h-1zM241,727h1v1h-1zM250,727h1v1h-1zM259,727h1v1h-1zM267,727h1v1h-1zM276,727h1v1h-1zM285,727h1v1h-1zM293,727h1v1h-1zM302,727h1v1h-1zM311,727h1v1h-1zM319,727h1v1h-1zM328,727h1v1h-1zM336,727h1v1h-1zM345,727h1v1h-1zM354,727h1v1h-1zM362,727h1v1h-1zM371,727h1v1h-1zM380,727h1v1h-1zM388,727h1v1h-1zM397,727h1v1h-1zM406,727h1v1h-1zM414,727h1v1h-1zM423,727h1v1h-1zM432,727h1v1h-1zM440,727h1v1h-1zM449,727h1v1h-1zM457,727h1v1h-1zM466,727h1v1h-1zM475,727h1v1h-1zM483,727h1v1h-1zM492,727h1v1h-1zM501,727h1v1h-1zM509,727h1v1h-1zM518,727h1v1h-1zM527,727h1v1h-1zM535,727h1v1h-1zM544,727h1v1h-1zM552,727h1v1h-1zM561,727h1v1h-1zM570,727h1v1h-1zM578,727h1v1h-1zM587,727h1v1h-1zM596,727h1v1h-1zM604,727h1v1h-1zM613,727h1v1h-1zM622,727h1v1h-1zM630,727h1v1h-1zM639,727h1v1h-1zM648,727h1v1h-1zM656,727h1v1h-1zM665,727h1v1h-1zM673,727h1v1h-1zM682,727h1v1h-1zM691,727h1v1h-1zM699,727h1v1h-1zM708,727h1v1h-1zM717,727h1v1h-1zM725,727h1v1h-1zM734,727h1v1h-1zM743,727h1v1h-1zM751,727h1v1h-1zM760,727h1v1h-1zM768,727h1v1h-1zM777,727h1v1h-1zM786,727h1v1h-1zM794,727h1v1h-1zM803,727h1v1h-1zM812,727h1v1h-1zM820,727h1v1h-1zM829,727h1v1h-1zM838,727h1v1h-1zM846,727h1v1h-1zM855,727h1v1h-1zM864,727h1v1h-1zM0,809h1v1h-1zM8,809h1v1h-1zM17,809h1v1h-1zM25,809h1v1h-1zM34,809h1v1h-1zM43,809h1v1h-1zM51,809h1v1h-1zM60,809h1v1h-1zM69,809h1v1h-1zM77,809h1v1h-1zM86,809h1v1h-1zM95,809h1v1h-1zM103,809h1v1h-1zM112,809h1v1h-1zM120,809h1v1h-1zM129,809h1v1h-1zM138,809h1v1h-1zM146,809h1v1h-1zM155,809h1v1h-1zM164,809h1v1h-1zM172,809h1v1h-1zM181,809h1v1h-1zM190,809h1v1h-1zM198,809h1v1h-1zM207,809h1v1h-1zM216,809h1v1h-1zM224,809h1v1h-1zM233,809h1v1h-1zM241,809h1v1h-1zM250,809h1v1h-1zM259,809h1v1h-1zM267,809h1v1h-1zM276,809h1v1h-1zM285,809h1v1h-1zM293,809h1v1h-1zM302,809h1v1h-1zM311,809h1v1h-1zM319,809h1v1h-1zM328,809h1v1h-1zM336,809h1v1h-1zM345,809h1v1h-1zM354,809h1v1h-1zM362,809h1v1h-1zM371,809h1v1h-1zM380,809h1v1h-1zM388,809h1v1h-1zM397,809h1v1h-1zM406,809h1v1h-1zM414,809h1v1h-1zM423,809h1v1h-1zM432,809h1v1h-1zM440,809h1v1h-1zM449,809h1v1h-1zM457,809h1v1h-1zM466,809h1v1h-1zM475,809h1v1h-1zM483,809h1v1h-1zM492,809h1v1h-1zM501,809h1v1h-1zM509,809h1v1h-1zM518,809h1v1h-1zM527,809h1v1h-1zM535,809h1v1h-1zM544,809h1v1h-1zM552,809h1v1h-1zM561,809h1v1h-1zM570,809h1v1h-1zM578,809h1v1h-1zM587,809h1v1h-1zM596,809h1v1h-1zM604,809h1v1h-1zM613,809h1v1h-1zM622,809h1v1h-1zM630,809h1v1h-1zM639,809h1v1h-1zM648,809h1v1h-1zM656,809h1v1h-1zM665,809h1v1h-1zM673,809h1v1h-1zM682,809h1v1h-1zM691,809h1v1h-1zM699,809h1v1h-1zM708,809h1v1h-1zM717,809h1v1h-1zM725,809h1v1h-1zM734,809h1v1h-1zM743,809h1v1h-1zM751,809h1v1h-1zM760,809h1v1h-1zM768,809h1v1h-1zM777,809h1v1h-1zM786,809h1v1h-1zM794,809h1v1h-1zM803,809h1v1h-1zM812,809h1v1h-1zM820,809h1v1h-1zM829,809h1v1h-1zM838,809h1v1h-1zM846,809h1v1h-1zM855,809h1v1h-1zM864,809h1v1h-1zM0,891h1v1h-1zM8,891h1v1h-1zM17,891h1v1h-1zM25,891h1v1h-1zM34,891h1v1h-1zM43,891h1v1h-1zM51,891h1v1h-1zM60,891h1v1h-1zM69,891h1v1h-1zM77,891h1v1h-1zM86,891h1v1h-1zM95,891h1v1h-1zM103,891h1v1h-1zM112,891h1v1h-1zM120,891h1v1h-1zM129,891h1v1h-1zM138,891h1v1h-1zM146,891h1v1h-1zM155,891h1v1h-1zM164,891h1v1h-1zM172,891h1v1h-1zM181,891h1v1h-1zM190,891h1v1h-1zM198,891h1v1h-1zM207,891h1v1h-1zM216,891h1v1h-1zM224,891h1v1h-1zM233,891h1v1h-1zM241,891h1v1h-1zM250,891h1v1h-1zM259,891h1v1h-1zM267,891h1v1h-1zM276,891h1v1h-1zM285,891h1v1h-1zM293,891h1v1h-1zM302,891h1v1h-1zM311,891h1v1h-1zM319,891h1v1h-1zM328,891h1v1h-1zM336,891h1v1h-1zM345,891h1v1h-1zM354,891h1v1h-1zM362,891h1v1h-1zM371,891h1v1h-1zM380,891h1v1h-1zM388,891h1v1h-1zM397,891h1v1h-1zM406,891h1v1h-1zM414,891h1v1h-1zM423,891h1v1h-1zM432,891h1v1h-1zM440,891h1v1h-1zM449,891h1v1h-1zM457,891h1v1h-1zM466,891h1v1h-1zM475,891h1v1h-1zM483,891h1v1h-1zM492,891h1v1h-1zM501,891h1v1h-1zM509,891h1v1h-1zM518,891h1v1h-1zM527,891h1v1h-1zM535,891h1v1h-1zM544,891h1v1h-1zM552,891h1v1h-1zM561,891h1v1h-1zM570,891h1v1h-1zM578,891h1v1h-1zM587,891h1v1h-1zM596,891h1v1h-1zM604,891h1v1h-1zM613,891h1v1h-1zM622,891h1v1h-1zM630,891h1v1h-1zM639,891h1v1h-1zM648,891h1v1h-1zM656,891h1v1h-1zM665,891h1v1h-1zM673,891h1v1h-1zM682,891h1v1h-1zM691,891h1v1h-1zM699,891h1v1h-1zM708,891h1v1h-1zM717,891h1v1h-1zM725,891h1v1h-1zM734,891h1v1h-1zM743,891h1v1h-1zM751,891h1v1h-1zM760,891h1v1h-1zM768,891h1v1h-1zM777,891h1v1h-1zM786,891h1v1h-1zM794,891h1v1h-1zM803,891h1v1h-1zM812,891h1v1h-1zM820,891h1v1h-1zM829,891h1v1h-1zM838,891h1v1h-1zM846,891h1v1h-1zM855,891h1v1h-1zM864,891h1v1h-1zM0,974h1v1h-1zM8,974h1v1h-1zM17,974h1v1h-1zM25,974h1v1h-1zM34,974h1v1h-1zM43,974h1v1h-1zM51,974h1v1h-1zM60,974h1v1h-1zM69,974h1v1h-1zM77,974h1v1h-1zM86,974h1v1h-1zM95,974h1v1h-1zM103,974h1v1h-1zM112,974h1v1h-1zM120,974h1v1h-1zM129,974h1v1h-1zM138,974h1v1h-1zM146,974h1v1h-1zM155,974h1v1h-1zM164,974h1v1h-1zM172,974h1v1h-1zM181,974h1v1h-1zM190,974h1v1h-1zM198,974h1v1h-1zM207,974h1v1h-1zM216,974h1v1h-1zM224,974h1v1h-1zM233,974h1v1h-1zM241,974h1v1h-1zM250,974h1v1h-1zM259,974h1v1h-1zM267,974h1v1h-1zM276,974h1v1h-1zM285,974h1v1h-1zM293,974h1v1h-1zM302,974h1v1h-1zM311,974h1v1h-1zM319,974h1v1h-1zM328,974h1v1h-1zM336,974h1v1h-1zM345,974h1v1h-1zM354,974h1v1h-1zM362,974h1v1h-1zM371,974h1v1h-1zM380,974h1v1h-1zM388,974h1v1h-1zM397,974h1v1h-1zM406,974h1v1h-1zM414,974h1v1h-1zM423,974h1v1h-1zM432,974h1v1h-1zM440,974h1v1h-1zM449,974h1v1h-1zM457,974h1v1h-1zM466,974h1v1h-1zM475,974h1v1h-1zM483,974h1v1h-1zM492,974h1v1h-1zM501,974h1v1h-1zM509,974h1v1h-1zM518,974h1v1h-1zM527,974h1v1h-1zM535,974h1v1h-1zM544,974h1v1h-1zM552,974h1v1h-1zM561,974h1v1h-1zM570,974h1v1h-1zM578,974h1v1h-1zM587,974h1v1h-1zM596,974h1v1h-1zM604,974h1v1h-1zM613,974h1v1h-1zM622,974h1v1h-1zM630,974h1v1h-1zM639,974h1v1h-1zM648,974h1v1h-1zM656,974h1v1h-1zM665,974h1v1h-1zM673,974h1v1h-1zM682,974h1v1h-1zM691,974h1v1h-1zM699,974h1v1h-1zM708,974h1v1h-1zM717,974h1v1h-1zM725,974h1v1h-1zM734,974h1v1h-1zM743,974h1v1h-1zM751,974h1v1h-1zM760,974h1v1h-1zM768,974h1v1h-1zM777,974h1v1h-1zM786,974h1v1h-1zM794,974h1v1h-1zM803,974h1v1h-1zM812,974h1v1h-1zM820,974h1v1h-1zM829,974h1v1h-1zM838,974h1v1h-1zM846,974h1v1h-1zM855,974h1v1h-1zM864,974h1v1h-1z" fill="#ffffff"/>
<rect x="0" y="481" width="865" height="2" fill="#9c9c9c" rx="0" />
<rect x="0" y="915" width="865" height="2" fill="#9c9c9c" rx="0" />
<rect x="0" y="810" width="865" height="2" fill="#9c9c9c" rx="0" />
<rect x="0" y="647" width="865" height="2" fill="#ffffff" rx="0" />
<path d="M4.3,846h2v2h-2zM8.6,846h2v2h-2zM12.9,846h2v2h-2zM17.3,846h2v2h-2zM21.6,846h2v2h-2zM25.9,846h2v2h-2zM30.2,846h2v2h-2zM34.5,846h2v2h-2zM38.9,846h2v2h-2zM43.2,846h2v2h-2zM47.5,846h2v2h-2zM51.8,846h2v2h-2zM56.1,846h2v2h-2zM60.5,846h2v2h-2zM64.8,846h2v2h-2zM69.1,846h2v2h-2zM73.4,846h2v2h-2zM77.7,846h2v2h-2zM82.1,846h2v2h-2zM86.4,846h2v2h-2zM90.7,846h2v2h-2zM95.0,846h2v2h-2zM99.3,846h2v2h-2zM103.7,846h2v2h-2zM108.0,846h2v2h-2zM112.3,846h2v2h-2zM116.6,846h2v2h-2zM120.9,846h2v2h-2zM125.3,846h2v2h-2zM129.6,846h2v2h-2zM133.9,846h2v2h-2zM138.2,846h2v2h-2zM142.5,846h2v2h-2zM146.9,846h2v2h-2zM151.2,846h2v2h-2zM155.5,846h2v2h-2zM159.8,846h2v2h-2zM164.1,846h2v2h-2zM168.5,846h2v2h-2zM172.8,846h2v2h-2zM177.1,846h2v2h-2zM181.4,846h2v2h-2zM185.7,846h2v2h-2zM190.1,846h2v2h-2zM194.4,846h2v2h-2zM198.7,846h2v2h-2zM203.0,846h2v2h-2zM207.3,846h2v2h-2zM211.7,846h2v2h-2zM216.0,846h2v2h-2zM220.3,846h2v2h-2zM224.6,846h2v2h-2zM228.9,846h2v2h-2zM233.3,846h2v2h-2zM237.6,846h2v2h-2zM241.9,846h2v2h-2zM246.2,846h2v2h-2zM250.5,846h2v2h-2zM254.9,846h2v2h-2zM259.2,846h2v2h-2zM263.5,846h2v2h-2zM267.8,846h2v2h-2zM272.1,846h2v2h-2zM276.5,846h2v2h-2zM280.8,846h2v2h-2zM285.1,846h2v2h-2zM289.4,846h2v2h-2zM293.7,846h2v2h-2zM298.1,846h2v2h-2zM302.4,846h2v2h-2zM306.7,846h2v2h-2zM311.0,846h2v2h-2zM315.3,846h2v2h-2zM319.7,846h2v2h-2zM324.0,846h2v2h-2zM328.3,846h2v2h-2zM332.6,846h2v2h-2zM336.9,846h2v2h-2zM341.3,846h2v2h-2zM345.6,846h2v2h-2zM349.9,846h2v2h-2zM354.2,846h2v2h-2zM358.5,846h2v2h-2zM362.9,846h2v2h-2zM367.2,846h2v2h-2zM371.5,846h2v2h-2zM375.8,846h2v2h-2zM380.1,846h2v2h-2zM384.5,846h2v2h-2zM388.8,846h2v2h-2zM393.1,846h2v2h-2zM397.4,846h2v2h-2zM401.7,846h2v2h-2zM406.1,846h2v2h-2zM410.4,846h2v2h-2zM414.7,846h2v2h-2zM419.0,846h2v2h-2zM423.3,846h2v2h-2zM427.7,846h2v2h-2zM432.0,846h2v2h-2zM436.3,846h2v2h-2zM440.6,846h2v2h-2zM444.9,846h2v2h-2zM449.3,846h2v2h-2zM453.6,846h2v2h-2zM457.9,846h2v2h-2zM462.2,846h2v2h-2zM466.5,846h2v2h-2zM470.9,846h2v2h-2zM475.2,846h2v2h-2zM479.5,846h2v2h-2zM483.8,846h2v2h-2zM488.1,846h2v2h-2zM492.5,846h2v2h-2zM496.8,846h2v2h-2zM501.1,846h2v2h-2zM505.4,846h2v2h-2zM509.7,846h2v2h-2zM514.1,846h2v2h-2zM518.4,846h2v2h-2zM522.7,846h2v2h-2zM527.0,846h2v2h-2zM531.3,846h2v2h-2zM535.7,846h2v2h-2zM540.0,846h2v2h-2zM544.3,846h2v2h-2zM548.6,846h2v2h-2zM552.9,846h2v2h-2zM557.3,846h2v2h-2zM561.6,846h2v2h-2zM565.9,846h2v2h-2zM570.2,846h2v2h-2zM574.5,846h2v2h-2zM578.9,846h2v2h-2zM583.2,846h2v2h-2zM587.5,846h2v2h-2zM591.8,846h2v2h-2zM596.1,846h2v2h-2zM600.5,846h2v2h-2zM604.8,846h2v2h-2zM609.1,846h2v2h-2zM613.4,846h2v2h-2zM617.7,846h2v2h-2zM622.1,846h2v2h-2zM626.4,846h2v2h-2zM630.7,846h2v2h-2zM635.0,846h2v2h-2zM639.3,846h2v2h-2zM643.7,846h2v2h-2zM648.0,846h2v2h-2zM652.3,846h2v2h-2zM656.6,846h2v2h-2zM660.9,846h2v2h-2zM665.3,846h2v2h-2zM669.6,846h2v2h-2zM673.9,846h2v2h-2zM678.2,846h2v2h-2zM682.5,846h2v2h-2zM686.9,846h2v2h-2zM691.2,846h2v2h-2zM695.5,846h2v2h-2zM699.8,846h2v2h-2zM704.1,846h2v2h-2zM708.5,846h2v2h-2zM712.8,846h2v2h-2zM717.1,846h2v2h-2zM721.4,846h2v2h-2zM725.7,846h2v2h-2zM730.1,846h2v2h-2zM734.4,846h2v2h-2zM738.7,846h2v2h-2zM743.0,846h2v2h-2zM747.3,846h2v2h-2zM751.7,846h2v2h-2zM756.0,846h2v2h-2zM760.3,846h2v2h-2zM764.6,846h2v2h-2zM768.9,846h2v2h-2zM773.3,846h2v2h-2zM777.6,846h2v2h-2zM781.9,846h2v2h-2zM786.2,846h2v2h-2zM790.5,846h2v2h-2zM794.9,846h2v2h-2zM799.2,846h2v2h-2zM803.5,846h2v2h-2zM807.8,846h2v2h-2zM812.1,846h2v2h-2zM816.5,846h2v2h-2zM820.8,846h2v2h-2zM825.1,846h2v2h-2zM829.4,846h2v2h-2zM833.7,846h2v2h-2zM838.1,846h2v2h-2zM842.4,846h2v2h-2zM846.7,846h2v2h-2zM851.0,846h2v2h-2zM855.3,846h2v2h-2zM859.7,846h2v2h-2zM864.0,846h2v2h-2z" fill="#00cccc"/>
<text x="5.79" y="495.3" font-size="13.3" fill="#66cc00" font-family='"Liberation Sans", sans-serif' textLength="88.80" lengthAdjust="spacingAndGlyphs">joint.0.acc-cmd</text>
<text x="4.80" y="511.2" font-size="13.3" fill="#66cc00" font-family='"Liberation Sans", sans-serif' textLength="49.23" lengthAdjust="spacingAndGlyphs">500 /div</text>
<text x="5.84" y="525.2" font-size="13.3" fill="#6600cc" font-family='"Liberation Sans", sans-serif' textLength="133.87" lengthAdjust="spacingAndGlyphs">joint.0.motor-pos-cmd</text>
<text x="4.80" y="541" font-size="13.3" fill="#6600cc" font-family='"Liberation Sans", sans-serif' textLength="58.32" lengthAdjust="spacingAndGlyphs">200m/div</text>
<text x="5.80" y="555.2" font-size="13.3" fill="#f0e4dc" font-family='"Liberation Sans", sans-serif' textLength="85.99" lengthAdjust="spacingAndGlyphs">joint.0.vel-cmd</text>
<text x="4.80" y="571" font-size="13.3" fill="#f0e4dc" font-family='"Liberation Sans", sans-serif' textLength="33.53" lengthAdjust="spacingAndGlyphs">2 /div</text>
<text x="5.84" y="822.4" font-size="13.3" fill="#00cccc" font-family='"Liberation Sans", sans-serif' textLength="78.46" lengthAdjust="spacingAndGlyphs">joint.0.f-error</text>
<text x="4.80" y="838.8" font-size="13.3" fill="#00cccc" font-family='"Liberation Sans", sans-serif' textLength="54.02" lengthAdjust="spacingAndGlyphs">500u/div</text>
<path d="M22.9,846.4 V816 M10.9,830 L22.9,816 L34.8,830" fill="none" stroke="#a0a0a0" stroke-width="1.6"/>
<svg x="0" y="151" width="865" height="824" viewBox="0 151 865 824" overflow="hidden">
<path d="M0,811.00 L5.00,811.00 H7.00 L9.32,811.00 H11.32 L13.64,811.00 H15.64 L17.96,811.00 H19.96 L22.28,811.00 H24.28 L26.60,811.00 H28.60 L30.92,811.00 H32.92 L35.24,811.00 H37.24 L39.56,811.00 H41.56 L43.88,811.00 H45.88 L48.20,811.00 H50.20 L52.52,811.00 H54.52 L56.84,811.00 H58.84 L61.16,811.00 H63.16 L65.48,811.00 H67.48 L69.80,811.00 H71.80 L74.12,811.00 H76.12 L78.44,811.00 H80.44 L82.76,811.00 H84.76 L87.08,811.00 H89.08 L91.40,811.00 H93.40 L95.72,810.00 H97.72 L100.04,811.00 H102.04 L104.36,810.00 H106.36 L108.68,811.00 H110.68 L113.00,811.00 H115.00 L117.32,810.00 H119.32 L121.64,810.00 H123.64 L125.96,811.00 H127.96 L130.28,810.00 H132.28 L134.60,810.00 H136.60 L138.92,810.00 H140.92 L143.24,810.00 H145.24 L147.56,810.00 H149.56 L151.88,810.00 H153.88 L156.20,811.00 H158.20 L160.52,811.00 H162.52 L164.84,811.00 H166.84 L169.16,811.00 H171.16 L173.48,811.00 H175.48 L177.80,811.00 H179.80 L182.12,810.00 H184.12 L186.44,811.00 H188.44 L190.76,811.00 H192.76 L195.08,811.00 H197.08 L199.40,810.00 H201.40 L203.72,810.00 H205.72 L208.04,810.00 H210.04 L212.36,810.00 H214.36 L216.68,810.00 H218.68 L221.00,811.00 H223.00 L225.32,811.00 H227.32 L229.64,811.00 H231.64 L233.96,811.00 H235.96 L238.28,811.00 H240.28 L242.60,811.00 H244.60 L246.92,811.00 H248.92 L251.24,811.00 H253.24 L255.56,811.00 H257.56 L259.88,811.00 H261.88 L264.20,811.00 H266.20 L268.52,811.00 H270.52 L272.84,811.00 H274.84 L277.16,811.00 H279.16 L281.48,811.00 H283.48 L285.80,811.00 H287.80 L290.12,811.00 H292.12 L294.44,811.00 H296.44 L298.76,811.00 H300.76 L303.08,810.00 H305.08 L307.40,810.00 H309.40 L311.72,811.00 H313.72 L316.04,811.00 H318.04 L320.36,811.00 H322.36 L324.68,811.00 H326.68 L329.00,811.00 H331.00 L333.32,811.00 H335.32 L337.64,811.00 H339.64 L341.96,811.00 H343.96 L346.28,811.00 H348.28 L350.60,811.00 H352.60 L354.92,811.00 H356.92 L359.24,811.00 H361.24 L363.56,811.00 H365.56 L367.88,811.00 H369.88 L372.20,811.00 H374.20 L376.52,811.00 H378.52 L380.84,811.00 H382.84 L385.16,811.00 H387.16 L389.48,811.00 H391.48 L393.80,811.00 H395.80 L398.12,811.00 H400.12 L402.44,811.00 H404.44 L406.76,811.00 H408.76 L411.08,811.00 H413.08 L415.40,811.00 H417.40 L419.72,811.00 H421.72 L424.04,811.00 H426.04 L428.36,811.00 H430.36 L432.68,811.00 H434.68 L437.00,811.00 H439.00 L441.32,811.00 H443.32 L445.64,811.00 H447.64 L449.96,811.00 H451.96 L454.28,811.00 H456.28 L458.60,811.00 H460.60 L462.92,811.00 H464.92 L467.24,811.00 H469.24 L471.56,811.00 H473.56 L475.88,811.00 H477.88 L480.20,811.00 H482.20 L484.52,811.00 H486.52 L488.84,811.00 H490.84 L493.16,810.80 H495.16 L497.48,836.88 H499.48 L501.80,972.10 H503.80 L506.12,934.24 H508.12 L510.44,857.21 H512.44 L514.76,804.38 H516.76 L519.08,795.83 H521.08 L523.40,808.40 H525.40 L527.72,819.28 H529.72 L532.04,815.64 H534.04 L536.36,808.99 H538.36 L540.68,808.24 H542.68 L545.00,810.40 H547.00 L549.32,811.80 H551.32 L553.64,811.79 H555.64 L557.96,811.00 H559.96 L562.28,810.96 H564.28 L566.60,810.92 H568.60 L570.92,810.88 H572.92 L575.24,810.84 H577.24 L579.56,810.80 H581.56 L583.88,780.99 H585.88 L588.20,737.00 H590.20 L592.52,716.78 H594.52 L596.84,735.19 H598.84 L601.16,788.18 H603.16 L605.48,822.17 H607.48 L609.80,820.30 H611.80 L614.12,809.39 H616.12 L618.44,807.11 H620.44 L622.76,808.04 H624.76 L627.08,810.00 H629.08 L631.40,810.00 H633.40 L635.72,810.00 H637.72 L640.04,810.00 H642.04 L644.36,810.00 H646.36 L648.68,809.00 H650.68 L653.00,809.00 H655.00 L657.32,810.00 H659.32 L661.64,809.00 H663.64 L665.96,810.00 H667.96 L670.28,809.00 H672.28 L674.60,809.00 H676.60 L678.92,809.00 H680.92 L683.24,810.00 H685.24 L687.56,809.00 H689.56 L691.88,809.00 H693.88 L696.20,809.00 H698.20 L700.52,809.00 H702.52 L704.84,809.00 H706.84 L709.16,809.00 H711.16 L713.48,809.00 H715.48 L717.80,810.00 H719.80 L722.12,809.00 H724.12 L726.44,809.00 H728.44 L730.76,810.00 H732.76 L735.08,809.00 H737.08 L739.40,809.00 H741.40 L743.72,810.00 H745.72 L748.04,809.00 H750.04 L752.36,809.00 H754.36 L756.68,809.00 H758.68 L761.00,810.00 H763.00 L765.32,810.00 H767.32 L769.64,809.00 H771.64 L773.96,810.00 H775.96 L778.28,810.00 H780.28 L782.60,810.00 H784.60 L786.92,810.00 H788.92 L791.24,810.00 H793.24 L795.56,810.00 H797.56 L799.88,810.00 H801.88 L804.20,810.00 H806.20 L808.52,810.00 H810.52 L812.84,811.00 H814.84 L817.16,810.00 H819.16 L821.48,810.00 H823.48 L825.80,811.00 H827.80 L830.12,810.00 H832.12 L834.44,811.00 H836.44 L838.76,811.00 H840.76 L843.08,811.00 H845.08 L847.40,811.00 H849.40 L851.72,811.00 H853.72 L856.04,811.00 H858.04 L860.36,811.00 H862.36 L864.68,811.00 H866.68 L869.00,811.00 H871.00" fill="none" stroke="#00cccc" stroke-width="2" stroke-linejoin="miter" stroke-miterlimit="2"/>
<path d="M0,502.70 L5.00,502.70 H7.00 L9.32,501.51 H11.32 L13.64,500.31 H15.64 L17.96,499.10 H19.96 L22.28,497.88 H24.28 L26.60,496.64 H28.60 L30.92,495.38 H32.92 L35.24,494.12 H37.24 L39.56,492.83 H41.56 L43.88,491.54 H45.88 L48.20,490.23 H50.20 L52.52,488.91 H54.52 L56.84,487.58 H58.84 L61.16,486.23 H63.16 L65.48,484.87 H67.48 L69.80,483.49 H71.80 L74.12,482.11 H76.12 L78.44,480.71 H80.44 L82.76,479.30 H84.76 L87.08,477.87 H89.08 L91.40,476.43 H93.40 L95.72,474.98 H97.72 L100.04,473.52 H102.04 L104.36,472.05 H106.36 L108.68,470.56 H110.68 L113.00,469.07 H115.00 L117.32,467.56 H119.32 L121.64,466.03 H123.64 L125.96,464.50 H127.96 L130.28,462.96 H132.28 L134.60,461.40 H136.60 L138.92,459.83 H140.92 L143.24,458.25 H145.24 L147.56,456.66 H149.56 L151.88,455.06 H153.88 L156.20,453.45 H158.20 L160.52,451.82 H162.52 L164.84,450.19 H166.84 L169.16,448.54 H171.16 L173.48,446.89 H175.48 L177.80,445.22 H179.80 L182.12,443.54 H184.12 L186.44,441.86 H188.44 L190.76,440.16 H192.76 L195.08,438.45 H197.08 L199.40,436.73 H201.40 L203.72,435.01 H205.72 L208.04,433.27 H210.04 L212.36,431.52 H214.36 L216.68,429.76 H218.68 L221.00,428.00 H223.00 L225.32,426.22 H227.32 L229.64,424.43 H231.64 L233.96,422.64 H235.96 L238.28,420.83 H240.28 L242.60,419.02 H244.60 L246.92,417.20 H248.92 L251.24,415.37 H253.24 L255.56,413.53 H257.56 L259.88,411.68 H261.88 L264.20,409.82 H266.20 L268.52,407.95 H270.52 L272.84,406.08 H274.84 L277.16,404.20 H279.16 L281.48,402.32 H283.48 L285.80,400.43 H287.80 L290.12,398.54 H292.12 L294.44,396.64 H296.44 L298.76,394.74 H300.76 L303.08,392.84 H305.08 L307.40,390.93 H309.40 L311.72,389.03 H313.72 L316.04,387.13 H318.04 L320.36,385.23 H322.36 L324.68,383.32 H326.68 L329.00,381.43 H331.00 L333.32,379.53 H335.32 L337.64,377.64 H339.64 L341.96,375.76 H343.96 L346.28,373.88 H348.28 L350.60,372.00 H352.60 L354.92,370.13 H356.92 L359.24,368.27 H361.24 L363.56,366.42 H365.56 L367.88,364.58 H369.88 L372.20,362.75 H374.20 L376.52,360.93 H378.52 L380.84,359.12 H382.84 L385.16,357.32 H387.16 L389.48,355.53 H391.48 L393.80,353.76 H395.80 L398.12,352.01 H400.12 L402.44,350.26 H404.44 L406.76,348.54 H408.76 L411.08,346.83 H413.08 L415.40,345.13 H417.40 L419.72,343.46 H421.72 L424.04,341.80 H426.04 L428.36,340.17 H430.36 L432.68,338.55 H434.68 L437.00,336.96 H439.00 L441.32,335.38 H443.32 L445.64,333.83 H447.64 L449.96,332.30 H451.96 L454.28,330.80 H456.28 L458.60,329.32 H460.60 L462.92,327.87 H464.92 L467.24,326.44 H469.24 L471.56,325.04 H473.56 L475.88,323.67 H477.88 L480.20,322.32 H482.20 L484.52,321.01 H486.52 L488.84,319.72 H490.84 L493.16,318.47 H495.16 L497.48,317.24 H499.48 L501.80,316.05 H503.80 L506.12,314.89 H508.12 L510.44,313.76 H512.44 L514.76,312.66 H516.76 L519.08,311.57 H521.08 L523.40,310.51 H525.40 L527.72,309.47 H529.72 L532.04,308.44 H534.04 L536.36,307.42 H538.36 L540.68,306.41 H542.68 L545.00,305.41 H547.00 L549.32,304.41 H551.32 L553.64,303.42 H555.64 L557.96,302.42 H559.96 L562.28,301.42 H564.28 L566.60,300.41 H568.60 L570.92,299.39 H572.92 L575.24,298.36 H577.24 L579.56,297.31 H581.56 L583.88,296.25 H585.88 L588.20,295.16 H590.20 L592.52,294.05 H594.52 L596.84,292.92 H598.84 L601.16,291.75 H603.16 L605.48,290.56 H607.48 L609.80,289.33 H611.80 L614.12,288.06 H616.12 L618.44,286.75 H620.44 L622.76,285.40 H624.76 L627.08,284.01 H629.08 L631.40,282.56 H633.40 L635.72,281.07 H637.72 L640.04,279.52 H642.04 L644.36,277.91 H646.36 L648.68,276.25 H650.68 L653.00,274.52 H655.00 L657.32,272.73 H659.32 L661.64,270.87 H663.64 L665.96,268.95 H667.96 L670.28,266.95 H672.28 L674.60,264.87 H676.60 L678.92,262.71 H680.92 L683.24,260.48 H685.24 L687.56,258.16 H689.56 L691.88,255.75 H693.88 L696.20,253.26 H698.20 L700.52,250.68 H702.52 L704.84,248.01 H706.84 L709.16,245.26 H711.16 L713.48,242.43 H715.48 L717.80,239.52 H719.80 L722.12,236.54 H724.12 L726.44,233.47 H728.44 L730.76,230.32 H732.76 L735.08,227.11 H737.08 L739.40,223.82 H741.40 L743.72,220.45 H745.72 L748.04,217.02 H750.04 L752.36,213.52 H754.36 L756.68,209.95 H758.68 L761.00,206.31 H763.00 L765.32,202.61 H767.32 L769.64,198.84 H771.64 L773.96,195.01 H775.96 L778.28,191.13 H780.28 L782.60,187.18 H784.60 L786.92,183.17 H788.92 L791.24,179.11 H793.24 L795.56,175.00 H797.56 L799.88,170.83 H801.88 L804.20,166.61 H806.20 L808.52,162.33 H810.52 L812.84,158.01 H814.84 L817.16,153.64 H819.16 L821.48,149.23 H823.48 L825.80,144.76 H827.80 L830.12,140.26 H832.12 L834.44,135.71 H836.44 L838.76,131.12 H840.76 L843.08,126.50 H845.08 L847.40,121.83 H849.40 L851.72,117.13 H853.72 L856.04,112.39 H858.04 L860.36,107.62 H862.36 L864.68,102.82 H866.68 L869.00,97.99 H871.00" fill="none" stroke="#6f00d6" stroke-width="2" stroke-linejoin="miter" stroke-miterlimit="2"/>
<path d="M0,482.80 L5.00,482.80 H7.00 L9.32,482.80 H11.32 L13.64,482.80 H15.64 L17.96,482.80 H19.96 L22.28,482.11 H24.28 L26.60,480.76 H28.60 L30.92,480.39 H32.92 L35.24,480.03 H37.24 L39.56,479.65 H41.56 L43.88,479.25 H45.88 L48.20,478.86 H50.20 L52.52,478.48 H54.52 L56.84,478.11 H58.84 L61.16,477.75 H63.16 L65.48,477.41 H67.48 L69.80,477.11 H71.80 L74.12,476.81 H76.12 L78.44,476.51 H80.44 L82.76,476.22 H84.76 L87.08,475.92 H89.08 L91.40,475.61 H93.40 L95.72,475.29 H97.72 L100.04,474.96 H102.04 L104.36,474.77 H106.36 L108.68,474.61 H110.68 L113.00,474.46 H115.00 L117.32,474.30 H119.32 L121.64,474.06 H123.64 L125.96,473.68 H127.96 L130.28,473.29 H132.28 L134.60,472.91 H136.60 L138.92,472.53 H140.92 L143.24,469.48 H145.24 L147.56,475.98 H149.56 L151.88,480.50 H153.88 L156.20,480.50 H158.20 L160.52,480.50 H162.52 L164.84,480.50 H166.84 L169.16,480.50 H171.16 L173.48,474.92 H175.48 L177.80,479.88 H179.80 L182.12,478.58 H184.12 L186.44,477.27 H188.44 L190.76,475.97 H192.76 L195.08,474.67 H197.08 L199.40,473.37 H201.40 L203.72,472.07 H205.72 L208.04,472.25 H210.04 L212.36,473.70 H214.36 L216.68,475.89 H218.68 L221.00,478.03 H223.00 L225.32,480.17 H227.32 L229.64,481.51 H231.64 L233.96,482.10 H235.96 L238.28,482.70 H240.28 L242.60,482.28 H244.60 L246.92,481.85 H248.92 L251.24,481.42 H253.24 L255.56,481.08 H257.56 L259.88,480.82 H261.88 L264.20,480.56 H266.20 L268.52,480.31 H270.52 L272.84,480.05 H274.84 L277.16,479.79 H279.16 L281.48,479.54 H283.48 L285.80,479.28 H287.80 L290.12,479.02 H292.12 L294.44,475.31 H296.44 L298.76,472.62 H300.76 L303.08,474.13 H305.08 L307.40,482.41 H309.40 L311.72,483.20 H313.72 L316.04,483.99 H318.04 L320.36,484.62 H322.36 L324.68,484.96 H326.68 L329.00,485.30 H331.00 L333.32,485.63 H335.32 L337.64,485.97 H339.64 L341.96,486.31 H343.96 L346.28,486.65 H348.28 L350.60,487.00 H352.60 L354.92,487.34 H356.92 L359.24,487.69 H361.24 L363.56,488.03 H365.56 L367.88,488.38 H369.88 L372.20,488.72 H374.20 L376.52,488.92 H378.52 L380.84,489.07 H382.84 L385.16,489.22 H387.16 L389.48,489.37 H391.48 L393.80,489.52 H395.80 L398.12,489.67 H400.12 L402.44,489.82 H404.44 L406.76,485.45 H408.76 L411.08,485.25 H413.08 L415.40,485.61 H417.40 L419.72,485.98 H421.72 L424.04,486.40 H426.04 L428.36,486.83 H430.36 L432.68,487.26 H434.68 L437.00,487.69 H439.00 L441.32,488.12 H443.32 L445.64,488.55 H447.64 L449.96,488.98 H451.96 L454.28,489.41 H456.28 L458.60,489.84 H460.60 L462.92,490.14 H464.92 L467.24,490.41 H469.24 L471.56,490.68 H473.56 L475.88,490.95 H477.88 L480.20,491.00 H482.20 L484.52,491.00 H486.52 L488.84,493.58 H490.84 L493.16,772.42 H495.16 L497.48,201.68 H499.48 L501.80,493.20 H503.80 L506.12,493.36 H508.12 L510.44,493.52 H512.44 L514.76,499.28 H516.76 L519.08,507.90 H521.08 L523.40,513.80 H525.40 L527.72,493.39 H529.72 L532.04,484.06 H534.04 L536.36,484.85 H538.36 L540.68,485.72 H542.68 L545.00,486.58 H547.00 L549.32,487.44 H551.32 L553.64,488.69 H555.64 L557.96,490.09 H559.96 L562.28,491.50 H564.28 L566.60,492.90 H568.60 L570.92,493.92 H572.92 L575.24,412.60 H577.24 L579.56,412.60 H581.56 L583.88,479.79 H585.88 L588.20,480.10 H590.20 L592.52,480.09 H594.52 L596.84,478.31 H598.84 L601.16,476.53 H603.16 L605.48,474.74 H607.48 L609.80,472.96 H611.80 L614.12,471.18 H616.12 L618.44,469.40 H620.44 L622.76,467.61 H624.76 L627.08,465.83 H629.08 L631.40,464.05 H633.40 L635.72,462.27 H637.72 L640.04,460.48 H642.04 L644.36,458.32 H646.36 L648.68,456.16 H650.68 L653.00,454.00 H655.00 L657.32,452.52 H659.32 L661.64,451.07 H663.64 L665.96,449.62 H667.96 L670.28,448.80 H672.28 L674.60,448.80 H676.60 L678.92,448.80 H680.92 L683.24,448.80 H685.24 L687.56,448.80 H689.56 L691.88,448.80 H693.88 L696.20,448.80 H698.20 L700.52,448.80 H702.52 L704.84,448.80 H706.84 L709.16,448.80 H711.16 L713.48,448.80 H715.48 L717.80,448.80 H719.80 L722.12,448.80 H724.12 L726.44,448.80 H728.44 L730.76,448.80 H732.76 L735.08,448.80 H737.08 L739.40,448.80 H741.40 L743.72,448.80 H745.72 L748.04,448.80 H750.04 L752.36,448.80 H754.36 L756.68,448.80 H758.68 L761.00,449.77 H763.00 L765.32,451.87 H767.32 L769.64,453.95 H771.64 L773.96,455.54 H775.96 L778.28,457.13 H780.28 L782.60,458.72 H784.60 L786.92,460.31 H788.92 L791.24,461.90 H793.24 L795.56,463.49 H797.56 L799.88,465.07 H801.88 L804.20,466.66 H806.20 L808.52,468.25 H810.52 L812.84,469.83 H814.84 L817.16,471.42 H819.16 L821.48,473.00 H823.48 L825.80,474.59 H827.80 L830.12,476.17 H832.12 L834.44,477.75 H836.44 L838.76,479.34 H840.76 L843.08,481.17 H845.08 L847.40,483.03 H849.40 L851.72,484.89 H853.72 L856.04,486.75 H858.04 L860.36,488.60 H862.36 L864.68,490.46 H866.68 L869.00,492.31 H871.00" fill="none" stroke="#66d800" stroke-width="2" stroke-linejoin="miter" stroke-miterlimit="2"/>
<path d="M0,520.30 L5.00,520.30 H7.00 L9.32,520.22 H11.32 L13.64,520.14 H15.64 L17.96,520.05 H19.96 L22.28,519.97 H24.28 L26.60,519.89 H28.60 L30.92,519.80 H32.92 L35.24,519.72 H37.24 L39.56,519.64 H41.56 L43.88,519.08 H45.88 L48.20,518.13 H50.20 L52.52,517.19 H54.52 L56.84,516.24 H58.84 L61.16,515.30 H63.16 L65.48,514.35 H67.48 L69.80,513.41 H71.80 L74.12,512.38 H76.12 L78.44,511.31 H80.44 L82.76,510.23 H84.76 L87.08,509.16 H89.08 L91.40,508.09 H93.40 L95.72,506.94 H97.72 L100.04,505.39 H102.04 L104.36,503.83 H106.36 L108.68,502.28 H110.68 L113.00,500.72 H115.00 L117.32,499.16 H119.32 L121.64,497.43 H123.64 L125.96,495.39 H127.96 L130.28,493.35 H132.28 L134.60,490.95 H136.60 L138.92,488.51 H140.92 L143.24,486.08 H145.24 L147.56,483.65 H149.56 L151.88,482.88 H153.88 L156.20,482.30 H158.20 L160.52,481.73 H162.52 L164.84,481.15 H166.84 L169.16,480.57 H171.16 L173.48,479.88 H175.48 L177.80,479.18 H179.80 L182.12,478.47 H184.12 L186.44,477.51 H188.44 L190.76,476.05 H192.76 L195.08,474.59 H197.08 L199.40,472.87 H201.40 L203.72,470.61 H205.72 L208.04,468.46 H210.04 L212.36,466.64 H214.36 L216.68,464.85 H218.68 L221.00,463.65 H223.00 L225.32,462.60 H227.32 L229.64,462.60 H231.64 L233.96,462.60 H235.96 L238.28,462.60 H240.28 L242.60,462.60 H244.60 L246.92,462.60 H248.92 L251.24,462.60 H253.24 L255.56,462.60 H257.56 L259.88,462.60 H261.88 L264.20,462.34 H266.20 L268.52,461.72 H270.52 L272.84,461.10 H274.84 L277.16,460.47 H279.16 L281.48,459.84 H283.48 L285.80,459.21 H287.80 L290.12,458.58 H292.12 L294.44,457.81 H296.44 L298.76,455.45 H300.76 L303.08,453.61 H305.08 L307.40,452.76 H309.40 L311.72,453.43 H313.72 L316.04,454.09 H318.04 L320.36,454.73 H322.36 L324.68,455.13 H326.68 L329.00,455.53 H331.00 L333.32,455.93 H335.32 L337.64,456.33 H339.64 L341.96,457.19 H343.96 L346.28,459.05 H348.28 L350.60,460.41 H352.60 L354.92,461.66 H356.92 L359.24,462.91 H361.24 L363.56,464.19 H365.56 L367.88,465.53 H369.88 L372.20,466.87 H374.20 L376.52,468.21 H378.52 L380.84,469.84 H382.84 L385.16,472.26 H387.16 L389.48,474.68 H391.48 L393.80,477.10 H395.80 L398.12,479.23 H400.12 L402.44,480.33 H404.44 L406.76,481.43 H408.76 L411.08,482.59 H413.08 L415.40,484.00 H417.40 L419.72,485.41 H421.72 L424.04,486.93 H426.04 L428.36,488.45 H430.36 L432.68,489.98 H434.68 L437.00,491.50 H439.00 L441.32,493.03 H443.32 L445.64,494.54 H447.64 L449.96,496.06 H451.96 L454.28,497.57 H456.28 L458.60,499.08 H460.60 L462.92,500.60 H464.92 L467.24,502.67 H469.24 L471.56,504.83 H473.56 L475.88,506.99 H477.88 L480.20,509.15 H482.20 L484.52,511.31 H486.52 L488.84,512.42 H490.84 L493.16,550.88 H495.16 L497.48,551.50 H499.48 L501.80,517.10 H503.80 L506.12,520.46 H508.12 L510.44,523.83 H512.44 L514.76,527.19 H516.76 L519.08,533.28 H521.08 L523.40,540.24 H525.40 L527.72,545.65 H529.72 L532.04,546.62 H534.04 L536.36,547.60 H538.36 L540.68,548.57 H542.68 L545.00,549.54 H547.00 L549.32,550.51 H551.32 L553.64,552.43 H555.64 L557.96,554.73 H559.96 L562.28,557.04 H564.28 L566.60,559.35 H568.60 L570.92,561.66 H572.92 L575.24,556.85 H577.24 L579.56,542.53 H581.56 L583.88,530.07 H585.88 L588.20,528.66 H590.20 L592.52,528.18 H594.52 L596.84,526.83 H598.84 L601.16,524.98 H603.16 L605.48,523.13 H607.48 L609.80,521.06 H611.80 L614.12,517.26 H616.12 L618.44,513.46 H620.44 L622.76,509.66 H624.76 L627.08,505.80 H629.08 L631.40,501.22 H633.40 L635.72,496.64 H637.72 L640.04,492.05 H642.04 L644.36,486.88 H646.36 L648.68,481.65 H650.68 L653.00,473.54 H655.00 L657.32,465.44 H659.32 L661.64,457.33 H663.64 L665.96,449.23 H667.96 L670.28,441.42 H672.28 L674.60,433.73 H676.60 L678.92,426.05 H680.92 L683.24,418.36 H685.24 L687.56,410.03 H689.56 L691.88,401.66 H693.88 L696.20,393.28 H698.20 L700.52,385.00 H702.52 L704.84,377.10 H706.84 L709.16,369.20 H711.16 L713.48,361.30 H715.48 L717.80,354.42 H719.80 L722.12,346.81 H724.12 L726.44,337.76 H728.44 L730.76,328.70 H732.76 L735.08,320.10 H737.08 L739.40,311.53 H741.40 L743.72,302.95 H745.72 L748.04,295.08 H750.04 L752.36,287.30 H754.36 L756.68,279.52 H758.68 L761.00,272.17 H763.00 L765.32,264.89 H767.32 L769.64,257.61 H771.64 L773.96,250.09 H775.96 L778.28,242.56 H780.28 L782.60,235.98 H784.60 L786.92,229.48 H788.92 L791.24,223.95 H793.24 L795.56,220.18 H797.56 L799.88,216.40 H801.88 L804.20,212.91 H806.20 L808.52,209.49 H810.52 L812.84,206.07 H814.84 L817.16,203.47 H819.16 L821.48,201.50 H823.48 L825.80,199.52 H827.80 L830.12,197.59 H832.12 L834.44,197.05 H836.44 L838.76,196.52 H840.76 L843.08,195.99 H845.08 L847.40,196.78 H849.40 L851.72,197.84 H853.72 L856.04,198.90 H858.04 L860.36,199.96 H862.36 L864.68,201.02 H866.68 L869.00,202.14 H871.00" fill="none" stroke="#ffcccc" stroke-width="2" stroke-linejoin="miter" stroke-miterlimit="2"/>
<circle cx="500" cy="552" r="4.9" fill="#ffcccc"/>
</svg>
<path d="M499.6,201 C499.6,199.5 500.8,198.8 502,199.6 L513.8,209.3 C515.3,210.6 514.8,213.2 512.6,213.2 L509.5,213.4 C507.5,213.6 505.5,215 504,216.8 L503,217.8 C501.6,219.2 499.6,218.6 499.6,216.6 Z" fill="#000" stroke="#fff" stroke-width="1.4"/>
<rect x="2.2" y="977.5" width="51" height="33.5" fill="#cc0000" stroke="#000" stroke-width="2.2" rx="2.5" />
<text x="27.7" y="998.9" font-size="13" fill="#1c1c1c" text-anchor="middle" font-family='"Liberation Sans", sans-serif' >1</text>
<rect x="57.2" y="977.8" width="49.2" height="33" fill="#00cccc" stroke="#a8a8a8" stroke-width="1.6" rx="2.5" />
<text x="81.80000000000001" y="998.9" font-size="13" fill="#1c1c1c" text-anchor="middle" font-family='"Liberation Sans", sans-serif' >2</text>
<rect x="111.2" y="977.8" width="49.2" height="33" fill="#66cc00" stroke="#a8a8a8" stroke-width="1.6" rx="2.5" />
<text x="135.8" y="998.9" font-size="13" fill="#1c1c1c" text-anchor="middle" font-family='"Liberation Sans", sans-serif' >3</text>
<rect x="165.2" y="977.8" width="49.2" height="33" fill="#6600cc" stroke="#a8a8a8" stroke-width="1.6" rx="2.5" />
<text x="189.79999999999998" y="998.9" font-size="13" fill="#1c1c1c" text-anchor="middle" font-family='"Liberation Sans", sans-serif' >4</text>
<rect x="219.2" y="977.8" width="49.2" height="33" fill="#fafafa" stroke="#c2c2c2" stroke-width="2" rx="2.5" />
<text x="243.79999999999998" y="998.9" font-size="13" fill="#1c1c1c" text-anchor="middle" font-family='"Liberation Sans", sans-serif' >5</text>
<rect x="273.2" y="977.8" width="49.2" height="33" fill="#fafafa" stroke="#c2c2c2" stroke-width="2" rx="2.5" />
<text x="297.8" y="998.9" font-size="13" fill="#1c1c1c" text-anchor="middle" font-family='"Liberation Sans", sans-serif' >6</text>
<rect x="327.2" y="977.8" width="49.2" height="33" fill="#fafafa" stroke="#c2c2c2" stroke-width="2" rx="2.5" />
<text x="351.8" y="998.9" font-size="13" fill="#1c1c1c" text-anchor="middle" font-family='"Liberation Sans", sans-serif' >7</text>
<rect x="381.2" y="977.8" width="49.2" height="33" fill="#fafafa" stroke="#c2c2c2" stroke-width="2" rx="2.5" />
<text x="405.8" y="998.9" font-size="13" fill="#1c1c1c" text-anchor="middle" font-family='"Liberation Sans", sans-serif' >8</text>
<rect x="435.2" y="977.8" width="49.2" height="33" fill="#fafafa" stroke="#c2c2c2" stroke-width="2" rx="2.5" />
<text x="459.8" y="998.9" font-size="13" fill="#1c1c1c" text-anchor="middle" font-family='"Liberation Sans", sans-serif' >9</text>
<rect x="489.2" y="977.8" width="49.2" height="33" fill="#fafafa" stroke="#c2c2c2" stroke-width="2" rx="2.5" />
<text x="513.8" y="998.9" font-size="13" fill="#1c1c1c" text-anchor="middle" font-family='"Liberation Sans", sans-serif' >10</text>
<rect x="543.2" y="977.8" width="49.2" height="33" fill="#fafafa" stroke="#c2c2c2" stroke-width="2" rx="2.5" />
<text x="567.8000000000001" y="998.9" font-size="13" fill="#1c1c1c" text-anchor="middle" font-family='"Liberation Sans", sans-serif' >11</text>
<rect x="597.2" y="977.8" width="49.2" height="33" fill="#fafafa" stroke="#c2c2c2" stroke-width="2" rx="2.5" />
<text x="621.8000000000001" y="998.9" font-size="13" fill="#1c1c1c" text-anchor="middle" font-family='"Liberation Sans", sans-serif' >12</text>
<rect x="651.2" y="977.8" width="49.2" height="33" fill="#fafafa" stroke="#c2c2c2" stroke-width="2" rx="2.5" />
<text x="675.8000000000001" y="998.9" font-size="13" fill="#1c1c1c" text-anchor="middle" font-family='"Liberation Sans", sans-serif' >13</text>
<rect x="705.2" y="977.8" width="49.2" height="33" fill="#fafafa" stroke="#c2c2c2" stroke-width="2" rx="2.5" />
<text x="729.8000000000001" y="998.9" font-size="13" fill="#1c1c1c" text-anchor="middle" font-family='"Liberation Sans", sans-serif' >14</text>
<rect x="759.2" y="977.8" width="49.2" height="33" fill="#fafafa" stroke="#c2c2c2" stroke-width="2" rx="2.5" />
<text x="783.8000000000001" y="998.9" font-size="13" fill="#1c1c1c" text-anchor="middle" font-family='"Liberation Sans", sans-serif' >15</text>
<rect x="813.2" y="977.8" width="49.2" height="33" fill="#fafafa" stroke="#c2c2c2" stroke-width="2" rx="2.5" />
<text x="837.8000000000001" y="998.9" font-size="13" fill="#1c1c1c" text-anchor="middle" font-family='"Liberation Sans", sans-serif' >16</text>
<path d="M0.5,1064.5 V1021.5 H864.5 V1064.5 Z" fill="none" stroke="#c4c4c4" stroke-width="1"/>
<rect x="0" y="1012" width="104" height="13" fill="#f4f4f4" rx="0" />
<text x="0.00" y="1025.6" font-size="13.3" fill="#363636" font-family='"Liberation Sans", sans-serif' textLength="101.96" lengthAdjust="spacingAndGlyphs">Selected Channel</text>
<text x="14.3" y="1052.1" font-size="13.3" fill="#363636" text-anchor="middle" font-family='"Liberation Sans", sans-serif' >1</text>
<line x1="30.5" y1="1030" x2="30.5" y2="1064" stroke="#d6d6d6" stroke-width="1" />
<rect x="38" y="1030.5" width="353" height="32.5" fill="#fafafa" stroke="#c8c8c8" stroke-width="1" rx="3.5" />
<text x="171.60" y="1052" font-size="13.3" fill="#363636" font-family='"Liberation Sans", sans-serif' textLength="85.99" lengthAdjust="spacingAndGlyphs">joint.0.vel-cmd</text>
<text x="395.6" y="1050" font-size="13.33" fill="#363636" text-anchor="start" font-family='"Liberation Mono", monospace' xml:space="preserve">f(-0.00400) =  2.33403 (ddt -31.14439)</text>
<path d="M866.5,165.5 V73.5 H936.5 V165.5 Z" fill="none" stroke="#c4c4c4" stroke-width="1"/>
<rect x="865.7" y="65" width="62.3" height="12" fill="#f4f4f4" rx="0" />
<text x="865.68" y="76.4" font-size="13.3" fill="#363636" font-family='"Liberation Sans", sans-serif' textLength="62.73" lengthAdjust="spacingAndGlyphs">Run Mode</text>
<circle cx="876.8" cy="90.9" r="6.5" fill="#fcfcfc" stroke="#c0c0c0" stroke-width="1"/>
<text x="886.22" y="96.0" font-size="13.3" fill="#363636" font-family='"Liberation Sans", sans-serif' textLength="46.13" lengthAdjust="spacingAndGlyphs">Normal</text>
<circle cx="876.8" cy="111.9" r="6.5" fill="#fcfcfc" stroke="#c0c0c0" stroke-width="1"/>
<text x="887.30" y="117.0" font-size="13.3" fill="#363636" font-family='"Liberation Sans", sans-serif' textLength="35.78" lengthAdjust="spacingAndGlyphs">Single</text>
<circle cx="876.8" cy="132.9" r="6.5" fill="#fcfcfc" stroke="#c0c0c0" stroke-width="1"/>
<text x="886.30" y="138.0" font-size="13.3" fill="#363636" font-family='"Liberation Sans", sans-serif' textLength="22.96" lengthAdjust="spacingAndGlyphs">Roll</text>
<circle cx="876.8" cy="153.9" r="7" fill="#1e9ce0"/>
<circle cx="876.8" cy="153.9" r="2.3" fill="#fff"/>
<text x="887.30" y="159.0" font-size="13.3" fill="#363636" font-family='"Liberation Sans", sans-serif' textLength="27.09" lengthAdjust="spacingAndGlyphs">Stop</text>
<path d="M938.5,1064.5 V73.5 H1010.5 V1064.5 Z" fill="none" stroke="#c4c4c4" stroke-width="1"/>
<rect x="938.2" y="65" width="42.8" height="12" fill="#f4f4f4" rx="0" />
<text x="939.20" y="76.4" font-size="13.3" fill="#363636" font-family='"Liberation Sans", sans-serif' textLength="41.23" lengthAdjust="spacingAndGlyphs">Trigger</text>
<circle cx="948.9" cy="90.9" r="7" fill="#1e9ce0"/>
<circle cx="948.9" cy="90.9" r="2.3" fill="#fff"/>
<text x="958.23" y="96.1" font-size="13.3" fill="#363636" font-family='"Liberation Sans", sans-serif' textLength="45.82" lengthAdjust="spacingAndGlyphs">Normal</text>
<circle cx="948.9" cy="111.9" r="6.5" fill="#fcfcfc" stroke="#c0c0c0" stroke-width="1"/>
<text x="959.30" y="117.1" font-size="13.3" fill="#363636" font-family='"Liberation Sans", sans-serif' textLength="29.32" lengthAdjust="spacingAndGlyphs">Auto</text>
<rect x="940" y="124" width="69" height="32.3" fill="#f8f8f8" stroke="#c8c8c8" stroke-width="1" rx="3.5" />
<text x="957.61" y="144.6" font-size="13.3" fill="#363636" font-family='"Liberation Sans", sans-serif' textLength="33.79" lengthAdjust="spacingAndGlyphs">Force</text>
<text x="941.65" y="169.8" font-size="13.3" fill="#363636" font-family='"Liberation Sans", sans-serif' textLength="30.31" lengthAdjust="spacingAndGlyphs">Level</text>
<text x="980.45" y="169.8" font-size="13.3" fill="#363636" font-family='"Liberation Sans", sans-serif' textLength="21.82" lengthAdjust="spacingAndGlyphs">Pos</text>
<path d="M866.5,1064.5 V174.5 H936.5 V1064.5 Z" fill="none" stroke="#c4c4c4" stroke-width="1"/>
<rect x="865.7" y="166" width="44.3" height="12" fill="#f4f4f4" rx="0" />
<text x="866.70" y="178.7" font-size="13.3" fill="#363636" font-family='"Liberation Sans", sans-serif' textLength="43.25" lengthAdjust="spacingAndGlyphs">Vertical</text>
<text x="871.60" y="195.8" font-size="13.3" fill="#363636" font-family='"Liberation Sans", sans-serif' textLength="26.07" lengthAdjust="spacingAndGlyphs">Gain</text>
<text x="907.56" y="195.8" font-size="13.3" fill="#363636" font-family='"Liberation Sans", sans-serif' textLength="21.61" lengthAdjust="spacingAndGlyphs">Pos</text>
<line x1="884.5" y1="204.5" x2="884.5" y2="975.5" stroke="#c4c4c4" stroke-width="5" stroke-linecap="round"/>
<line x1="884.5" y1="204.5" x2="884.5" y2="600.3" stroke="#1e9ce0" stroke-width="5" stroke-linecap="round"/>
<circle cx="884.5" cy="600.3" r="7.9" fill="#fafafa" stroke="#b4b4b4" stroke-width="1"/>
<line x1="918.5" y1="204.5" x2="918.5" y2="975.5" stroke="#c4c4c4" stroke-width="5" stroke-linecap="round"/>
<line x1="918.5" y1="204.5" x2="918.5" y2="669.1" stroke="#1e9ce0" stroke-width="5" stroke-linecap="round"/>
<circle cx="918.5" cy="669.1" r="7.9" fill="#fafafa" stroke="#b4b4b4" stroke-width="1"/>
<line x1="956.4" y1="178.5" x2="956.4" y2="940.5" stroke="#c4c4c4" stroke-width="5" stroke-linecap="round"/>
<line x1="956.4" y1="178.5" x2="956.4" y2="821" stroke="#1e9ce0" stroke-width="5" stroke-linecap="round"/>
<circle cx="956.4" cy="821" r="7.9" fill="#fafafa" stroke="#b4b4b4" stroke-width="1"/>
<line x1="992.5" y1="178.5" x2="992.5" y2="940.5" stroke="#c4c4c4" stroke-width="5" stroke-linecap="round"/>
<line x1="992.5" y1="178.5" x2="992.5" y2="567.3" stroke="#1e9ce0" stroke-width="5" stroke-linecap="round"/>
<circle cx="992.5" cy="567.3" r="7.9" fill="#fafafa" stroke="#b4b4b4" stroke-width="1"/>
<line x1="867" y1="984.5" x2="936" y2="984.5" stroke="#d6d6d6" stroke-width="1" />
<text x="886.10" y="1001" font-size="13.3" fill="#363636" font-family='"Liberation Sans", sans-serif' textLength="30.26" lengthAdjust="spacingAndGlyphs">Scale</text>
<text x="884.40" y="1016.9" font-size="13.3" fill="#363636" font-family='"Liberation Sans", sans-serif' textLength="32.94" lengthAdjust="spacingAndGlyphs">2 /div</text>
<rect x="867.5" y="1020" width="68" height="43" fill="#f8f8f8" stroke="#c8c8c8" stroke-width="1" rx="3.5" />
<text x="882.40" y="1038.8" font-size="13.3" fill="#363636" font-family='"Liberation Sans", sans-serif' textLength="36.98" lengthAdjust="spacingAndGlyphs">Offset</text>
<text x="881.90" y="1055" font-size="13.3" fill="#363636" font-family='"Liberation Sans", sans-serif' textLength="35.02" lengthAdjust="spacingAndGlyphs">0.000</text>
<line x1="939" y1="950.5" x2="1010" y2="950.5" stroke="#d6d6d6" stroke-width="1" />
<text x="958.56" y="966.7" font-size="13.3" fill="#363636" font-family='"Liberation Sans", sans-serif' textLength="30.00" lengthAdjust="spacingAndGlyphs">Level</text>
<text x="950.80" y="982.8" font-size="13.3" fill="#363636" font-family='"Liberation Sans", sans-serif' textLength="46.91" lengthAdjust="spacingAndGlyphs">-221.8u</text>
<rect x="939.6" y="986.6" width="69.5" height="32.5" fill="#f8f8f8" stroke="#c8c8c8" stroke-width="1" rx="3.5" />
<text x="955.31" y="1007.7" font-size="13.3" fill="#363636" font-family='"Liberation Sans", sans-serif' textLength="36.48" lengthAdjust="spacingAndGlyphs">Rising</text>
<rect x="939.6" y="1020" width="69.5" height="43" fill="#f8f8f8" stroke="#c8c8c8" stroke-width="1" rx="3.5" />
<text x="952.00" y="1038.8" font-size="13.3" fill="#363636" font-family='"Liberation Sans", sans-serif' textLength="41.49" lengthAdjust="spacingAndGlyphs">Source</text>
<text x="952.00" y="1055" font-size="13.3" fill="#363636" font-family='"Liberation Sans", sans-serif' textLength="44.48" lengthAdjust="spacingAndGlyphs">Chan  2</text>
</svg></body></html>
